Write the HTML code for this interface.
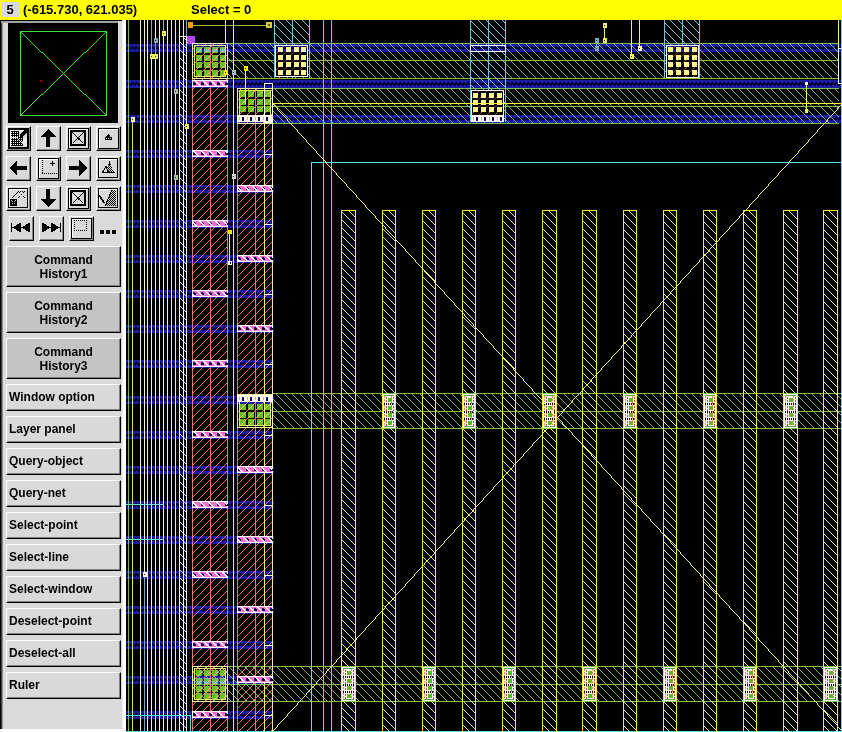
<!DOCTYPE html><html><head><meta charset="utf-8"><style>
*{margin:0;padding:0;box-sizing:border-box}
html,body{width:842px;height:732px;overflow:hidden;background:#000}
body{position:relative;font-family:"Liberation Sans",sans-serif;font-weight:bold;-webkit-font-smoothing:none;}
.abs{position:absolute}
#coord,#sel,#num,.tb{will-change:transform}
#top{left:0;top:0;width:842px;height:20px;background:#ffff00}
#num{left:2px;top:2px;width:18px;height:15px;background:#d8d8e0;font-size:13px;line-height:16px;text-align:center;color:#000;padding-right:2px}
#coord{left:23px;top:0;font-size:13px;line-height:19px;color:#000;white-space:pre}
#sel{left:191px;top:0;font-size:13px;line-height:19px;color:#000;white-space:pre}
#panel{left:0;top:20px;width:126px;height:712px;background:#dadada}
.btn{position:absolute;background:#d9d9d9;border-top:1px solid #fff;border-left:1px solid #fff;border-right:1px solid #000;border-bottom:1px solid #000;box-shadow:inset -1px -1px 0 #8a8a8a}
.tb{position:absolute;left:6px;width:115px;background:#c4c4c4;border-top:1px solid #fff;border-left:1px solid #fff;border-right:1px solid #000;border-bottom:1px solid #000;box-shadow:inset -1px -1px 0 #808080;font-size:12px;color:#000;white-space:pre}
.tb2{height:41px;text-align:center;line-height:14px;padding-top:6px}
.tb1{height:27px;line-height:25px;padding-left:2px;background:#d9d9d9}
</style></head><body>
<div id="top" class="abs"></div>
<div id="num" class="abs">5</div>
<div id="coord" class="abs">(-615.730, 621.035)</div>
<div id="sel" class="abs">Select = 0</div>
<div id="panel" class="abs">
<div class="abs" style="left:0;top:0;width:1px;height:712px;background:#000"></div>
<div class="abs" style="left:1px;top:0;width:1px;height:712px;background:#404040"></div>
<div class="abs" style="left:2px;top:0;width:1px;height:712px;background:#909090"></div>
<div class="abs" style="left:0;top:0;width:126px;height:1px;background:#000"></div>
<div class="abs" style="left:1px;top:1px;width:117px;height:2px;background:#a0a0a0"></div>
<div class="abs" style="left:122px;top:0;width:1px;height:712px;background:#eeeeee"></div>
<div class="abs" style="left:123px;top:0;width:3px;height:712px;background:#fff"></div>
<div class="abs" style="left:0;top:709px;width:126px;height:3px;background:#fff"></div>
</div>
<svg class="abs" style="left:0;top:0" width="126" height="732" shape-rendering="crispEdges">
<rect x="8" y="23" width="110" height="100" fill="#000"/>
<rect x="20.5" y="31.5" width="86" height="84" fill="none" stroke="#40e040" stroke-width="1"/>
<path d="M20,31h1v1h-1zM21,32h1v1h-1zM22,33h1v1h-1zM23,34h1v1h-1zM24,35h1v1h-1zM25,36h1v1h-1zM26,37h1v1h-1zM27,38h1v1h-1zM28,39h1v1h-1zM29,40h1v1h-1zM30,41h1v1h-1zM31,42h1v1h-1zM32,43h1v1h-1zM33,44h1v1h-1zM34,45h1v1h-1zM35,46h1v1h-1zM36,47h1v1h-1zM37,48h1v1h-1zM38,49h1v1h-1zM39,50h1v1h-1zM40,51h1v1h-1zM41,52h1v1h-1zM42,52h1v1h-1zM43,53h1v1h-1zM44,54h1v1h-1zM45,55h1v1h-1zM46,56h1v1h-1zM47,57h1v1h-1zM48,58h1v1h-1zM49,59h1v1h-1zM50,60h1v1h-1zM51,61h1v1h-1zM52,62h1v1h-1zM53,63h1v1h-1zM54,64h1v1h-1zM55,65h1v1h-1zM56,66h1v1h-1zM57,67h1v1h-1zM58,68h1v1h-1zM59,69h1v1h-1zM60,70h1v1h-1zM61,71h1v1h-1zM62,72h1v1h-1zM63,73h1v1h-1zM64,74h1v1h-1zM65,75h1v1h-1zM66,76h1v1h-1zM67,77h1v1h-1zM68,78h1v1h-1zM69,79h1v1h-1zM70,80h1v1h-1zM71,81h1v1h-1zM72,82h1v1h-1zM73,83h1v1h-1zM74,84h1v1h-1zM75,85h1v1h-1zM76,86h1v1h-1zM77,87h1v1h-1zM78,88h1v1h-1zM79,89h1v1h-1zM80,90h1v1h-1zM81,91h1v1h-1zM82,92h1v1h-1zM83,93h1v1h-1zM84,94h1v1h-1zM85,94h1v1h-1zM86,95h1v1h-1zM87,96h1v1h-1zM88,97h1v1h-1zM89,98h1v1h-1zM90,99h1v1h-1zM91,100h1v1h-1zM92,101h1v1h-1zM93,102h1v1h-1zM94,103h1v1h-1zM95,104h1v1h-1zM96,105h1v1h-1zM97,106h1v1h-1zM98,107h1v1h-1zM99,108h1v1h-1zM100,109h1v1h-1zM101,110h1v1h-1zM102,111h1v1h-1zM103,112h1v1h-1zM104,113h1v1h-1zM105,114h1v1h-1zM106,115h1v1h-1zM106,31h1v1h-1zM105,32h1v1h-1zM104,33h1v1h-1zM103,34h1v1h-1zM102,35h1v1h-1zM101,36h1v1h-1zM100,37h1v1h-1zM99,38h1v1h-1zM98,39h1v1h-1zM97,40h1v1h-1zM96,41h1v1h-1zM95,42h1v1h-1zM94,43h1v1h-1zM93,44h1v1h-1zM92,45h1v1h-1zM91,46h1v1h-1zM90,47h1v1h-1zM89,48h1v1h-1zM88,49h1v1h-1zM87,50h1v1h-1zM86,51h1v1h-1zM85,52h1v1h-1zM84,52h1v1h-1zM83,53h1v1h-1zM82,54h1v1h-1zM81,55h1v1h-1zM80,56h1v1h-1zM79,57h1v1h-1zM78,58h1v1h-1zM77,59h1v1h-1zM76,60h1v1h-1zM75,61h1v1h-1zM74,62h1v1h-1zM73,63h1v1h-1zM72,64h1v1h-1zM71,65h1v1h-1zM70,66h1v1h-1zM69,67h1v1h-1zM68,68h1v1h-1zM67,69h1v1h-1zM66,70h1v1h-1zM65,71h1v1h-1zM64,72h1v1h-1zM63,73h1v1h-1zM62,74h1v1h-1zM61,75h1v1h-1zM60,76h1v1h-1zM59,77h1v1h-1zM58,78h1v1h-1zM57,79h1v1h-1zM56,80h1v1h-1zM55,81h1v1h-1zM54,82h1v1h-1zM53,83h1v1h-1zM52,84h1v1h-1zM51,85h1v1h-1zM50,86h1v1h-1zM49,87h1v1h-1zM48,88h1v1h-1zM47,89h1v1h-1zM46,90h1v1h-1zM45,91h1v1h-1zM44,92h1v1h-1zM43,93h1v1h-1zM42,94h1v1h-1zM41,94h1v1h-1zM40,95h1v1h-1zM39,96h1v1h-1zM38,97h1v1h-1zM37,98h1v1h-1zM36,99h1v1h-1zM35,100h1v1h-1zM34,101h1v1h-1zM33,102h1v1h-1zM32,103h1v1h-1zM31,104h1v1h-1zM30,105h1v1h-1zM29,106h1v1h-1zM28,107h1v1h-1zM27,108h1v1h-1zM26,109h1v1h-1zM25,110h1v1h-1zM24,111h1v1h-1zM23,112h1v1h-1zM22,113h1v1h-1zM21,114h1v1h-1zM20,115h1v1h-1z" fill="#40e040"/>
<rect x="40" y="80" width="2" height="2" fill="#a00000"/>
</svg>
<div class="btn" style="left:6px;top:126px;width:25px;height:25px"></div>
<div class="btn" style="left:36px;top:126px;width:25px;height:25px"></div>
<div class="btn" style="left:66px;top:126px;width:25px;height:25px"></div>
<div class="btn" style="left:96px;top:126px;width:25px;height:25px"></div>
<div class="btn" style="left:6px;top:156px;width:25px;height:25px"></div>
<div class="btn" style="left:36px;top:156px;width:25px;height:25px"></div>
<div class="btn" style="left:66px;top:156px;width:25px;height:25px"></div>
<div class="btn" style="left:96px;top:156px;width:25px;height:25px"></div>
<div class="btn" style="left:6px;top:186px;width:25px;height:25px"></div>
<div class="btn" style="left:36px;top:186px;width:25px;height:25px"></div>
<div class="btn" style="left:66px;top:186px;width:25px;height:25px"></div>
<div class="btn" style="left:96px;top:186px;width:25px;height:25px"></div>
<div class="btn" style="left:9px;top:216px;width:25px;height:25px"></div>
<div class="btn" style="left:39px;top:216px;width:25px;height:25px"></div>
<div class="btn" style="left:69px;top:216px;width:25px;height:25px"></div>
<svg class="abs" style="left:0;top:0" width="126" height="250" shape-rendering="crispEdges"><defs><pattern id="st" patternUnits="userSpaceOnUse" width="2" height="2"><rect width="1" height="1" fill="#000"/><rect x="1" y="1" width="1" height="1" fill="#000"/></pattern><pattern id="st2" patternUnits="userSpaceOnUse" width="2" height="2"><rect width="2" height="2" fill="#000"/><rect x="1" y="0" width="1" height="1" fill="#fff"/></pattern></defs>
<path d="M8,128H29V149H8Z M10,130H27V147H10Z" fill="#000" fill-rule="evenodd"/>
<path d="M10,130H27V131H11V147H10Z" fill="#fff"/>
<rect x="10" y="130" width="17" height="17" fill="#d9d9d9"/>
<path d="M10,130H27V131H11V147H10Z" fill="#fff"/>
<rect x="11" y="131" width="8" height="6" fill="url(#st2)"/>
<path d="M11,138H16L23,145V146H11Z" fill="url(#st2)"/>
<path d="M17,138L20,135L24,139L21,142Z" fill="url(#st2)"/>
<path d="M19,135L25,129H27V132L22,138Z" fill="#000"/>
<path d="M23,140L27,135V146H23Z" fill="#ececec"/>
<path d="M40,137L48,129L56,137H50V147H46V137Z" fill="#000"/>
<path d="M68,128H89V149H68Z M69,129H88V148H69Z" fill="#000" fill-rule="evenodd"/>
<path d="M69,129H88V130H70V148H69Z" fill="#fff"/>
<path d="M70,130H86V146H70Z M72,132H84V144H72Z" fill="#000" fill-rule="evenodd"/>
<path d="M72.5,132.5L83.5,143.5M83.5,132.5L72.5,143.5" stroke="#000" stroke-width="1"/>
<path d="M77,138h1v-1h1v1h1v1h-1v1h-1v-1h-1z" fill="#000"/>
<path d="M98,128H119V149H98Z M99,129H118V148H99Z" fill="#000" fill-rule="evenodd"/>
<path d="M99,129H118V130H100V148H99Z" fill="#fff"/>
<path d="M108,134L110,136V137H112V140H105V137H106V136Z" fill="#000"/><rect x="106" y="138" width="1" height="1" fill="#ddd"/><rect x="108" y="138" width="1" height="1" fill="#ddd"/><rect x="110" y="138" width="1" height="1" fill="#ddd"/>
<path d="M9,168L17,160V166H27V170H17V176Z" fill="#000"/>
<path d="M38,158H59V179H38Z M39,159H58V178H39Z" fill="#000" fill-rule="evenodd"/>
<path d="M39,159H58V160H40V178H39Z" fill="#fff"/>
<rect x="42" y="160" width="1" height="1" fill="#000"/>
<rect x="42" y="162" width="1" height="1" fill="#000"/>
<rect x="42" y="164" width="1" height="1" fill="#000"/>
<rect x="42" y="166" width="1" height="1" fill="#000"/>
<rect x="42" y="168" width="1" height="1" fill="#000"/>
<rect x="42" y="170" width="1" height="1" fill="#000"/>
<rect x="42" y="172" width="1" height="1" fill="#000"/>
<rect x="42" y="173" width="1" height="1" fill="#000"/>
<rect x="44" y="173" width="1" height="1" fill="#000"/>
<rect x="46" y="173" width="1" height="1" fill="#000"/>
<rect x="48" y="173" width="1" height="1" fill="#000"/>
<rect x="50" y="173" width="1" height="1" fill="#000"/>
<rect x="52" y="173" width="1" height="1" fill="#000"/>
<rect x="54" y="173" width="1" height="1" fill="#000"/>
<rect x="56" y="173" width="1" height="1" fill="#000"/>
<rect x="50" y="163" width="5" height="1" fill="#000"/><rect x="52" y="161" width="1" height="5" fill="#000"/>
<path d="M87,168L79,160V166H69V170H79V176Z" fill="#000"/>
<path d="M98,158H118V178H98Z M99,159H117V177H99Z" fill="#000" fill-rule="evenodd"/>
<path d="M99,159H117V160H100V177H99Z" fill="#fff"/>
<path d="M102.5,172.5L106,166L108.5,172.5" fill="none" stroke="#000"/>
<path d="M109,161L114,172H107.5L106.5,169Z" fill="url(#st)"/>
<rect x="109" y="161" width="1" height="5" fill="#000"/>
<rect x="102" y="172" width="13" height="1" fill="#000"/>
<path d="M8,188H28V208H8Z M9,189H27V207H9Z" fill="#000" fill-rule="evenodd"/>
<path d="M9,189H27V190H10V207H9Z" fill="#fff"/>
<path d="M11.5,198.5L18.5,191.5" stroke="#000"/>
<rect x="10" y="199" width="7" height="7" fill="#000"/>
<path d="M11.5,200.5L15.5,204.5M15.5,200.5L11.5,204.5" stroke="#ccc"/><rect x="13" y="202" width="1" height="1" fill="#000"/>
<rect x="18" y="191" width="1" height="1" fill="#000"/>
<rect x="19" y="192" width="1" height="1" fill="#000"/>
<rect x="24" y="191" width="1" height="1" fill="#000"/>
<rect x="23" y="192" width="1" height="1" fill="#000"/>
<rect x="21" y="194" width="1" height="1" fill="#000"/>
<rect x="18" y="197" width="1" height="1" fill="#000"/>
<rect x="19" y="196" width="1" height="1" fill="#000"/>
<rect x="24" y="197" width="1" height="1" fill="#000"/>
<rect x="23" y="196" width="1" height="1" fill="#000"/>
<rect x="20" y="191" width="1" height="1" fill="#000"/>
<rect x="22" y="191" width="1" height="1" fill="#000"/>
<path d="M46,189H50V199H56L48,207L40,199H46Z" fill="#000"/>
<path d="M68,188H89V209H68Z M69,189H88V208H69Z" fill="#000" fill-rule="evenodd"/>
<path d="M69,189H88V190H70V208H69Z" fill="#fff"/>
<path d="M70,190H86V206H70Z M72,192H84V204H72Z" fill="#000" fill-rule="evenodd"/>
<path d="M72.5,192.5L83.5,203.5M83.5,192.5L72.5,203.5" stroke="#000" stroke-width="1"/>
<path d="M77,198h1v-1h1v1h1v1h-1v1h-1v-1h-1z" fill="#000"/>
<path d="M98,188H118V208H98Z M99,189H117V207H99Z" fill="#000" fill-rule="evenodd"/>
<path d="M99,189H117V190H100V207H99Z" fill="#fff"/>
<path d="M112,190H116V206H105Z" fill="url(#st)"/>
<path d="M112,190L105,206" stroke="#000" stroke-width="1"/>
<path d="M99.5,195.5L104.5,203.5" stroke="#000" stroke-width="1.5"/>
<rect x="11" y="223" width="1" height="9" fill="#000"/>
<path d="M12,227.5L21,222.5V232.5Z M21,227.5L30,222.5V232.5Z" fill="#000"/>
<rect x="60" y="223" width="1" height="9" fill="#000"/>
<path d="M60,227.5L51,222.5V232.5Z M51,227.5L42,222.5V232.5Z" fill="#000"/>
<path d="M71,218H92V239H71Z M72,219H91V238H72Z" fill="#000" fill-rule="evenodd"/>
<path d="M72,219H91V220H73V238H72Z" fill="#fff"/>
<rect x="74" y="220" width="1" height="1" fill="#000"/><rect x="74" y="230" width="1" height="1" fill="#000"/>
<rect x="76" y="220" width="1" height="1" fill="#000"/><rect x="76" y="230" width="1" height="1" fill="#000"/>
<rect x="78" y="220" width="1" height="1" fill="#000"/><rect x="78" y="230" width="1" height="1" fill="#000"/>
<rect x="80" y="220" width="1" height="1" fill="#000"/><rect x="80" y="230" width="1" height="1" fill="#000"/>
<rect x="82" y="220" width="1" height="1" fill="#000"/><rect x="82" y="230" width="1" height="1" fill="#000"/>
<rect x="84" y="220" width="1" height="1" fill="#000"/><rect x="84" y="230" width="1" height="1" fill="#000"/>
<rect x="86" y="220" width="1" height="1" fill="#000"/><rect x="86" y="230" width="1" height="1" fill="#000"/>
<rect x="74" y="222" width="1" height="1" fill="#000"/><rect x="86" y="222" width="1" height="1" fill="#000"/>
<rect x="74" y="224" width="1" height="1" fill="#000"/><rect x="86" y="224" width="1" height="1" fill="#000"/>
<rect x="74" y="226" width="1" height="1" fill="#000"/><rect x="86" y="226" width="1" height="1" fill="#000"/>
<rect x="74" y="228" width="1" height="1" fill="#000"/><rect x="86" y="228" width="1" height="1" fill="#000"/>
<rect x="100" y="230" width="4" height="4" fill="#000"/>
<rect x="106" y="230" width="4" height="4" fill="#000"/>
<rect x="112" y="230" width="4" height="4" fill="#000"/></svg>
<div class="tb tb2" style="top:246px">Command
History1</div>
<div class="tb tb2" style="top:292px">Command
History2</div>
<div class="tb tb2" style="top:338px">Command
History3</div>
<div class="tb tb1" style="top:384px">Window option</div>
<div class="tb tb1" style="top:416px">Layer panel</div>
<div class="tb tb1" style="top:448px">Query-object</div>
<div class="tb tb1" style="top:480px">Query-net</div>
<div class="tb tb1" style="top:512px">Select-point</div>
<div class="tb tb1" style="top:544px">Select-line</div>
<div class="tb tb1" style="top:576px">Select-window</div>
<div class="tb tb1" style="top:608px">Deselect-point</div>
<div class="tb tb1" style="top:640px">Deselect-all</div>
<div class="tb tb1" style="top:672px">Ruler</div>
<svg class="abs" style="left:0;top:0" width="842" height="732" shape-rendering="crispEdges"><defs><pattern id="bh1" patternUnits="userSpaceOnUse" width="4" height="1"><rect width="2" height="1" fill="#1c1cc0"/><rect x="2" width="2" height="1" fill="#080850"/></pattern><pattern id="bh2" patternUnits="userSpaceOnUse" width="4" height="1"><rect x="1" width="2" height="1" fill="#1c1cc0"/><rect x="3" width="1" height="1" fill="#080850"/></pattern><pattern id="p0" patternUnits="userSpaceOnUse" x="0" y="6" width="8" height="8"><path d="M-1,-1L9,9M7,-1L9,1M-1,7L1,9" stroke="#80b060" stroke-width="1" fill="none"/></pattern><pattern id="p1" patternUnits="userSpaceOnUse" x="0" y="6" width="8" height="8"><path d="M-1,-1L9,9M7,-1L9,1M-1,7L1,9" stroke="#78c4e0" stroke-width="1" fill="none"/></pattern><pattern id="p2" patternUnits="userSpaceOnUse" x="2" y="0" width="8" height="8"><path d="M-1,9L9,-1M-1,1L1,-1M7,9L9,7" stroke="#e87474" stroke-width="1" fill="none"/></pattern><pattern id="p3" patternUnits="userSpaceOnUse" x="0" y="6" width="8" height="8"><path d="M-1,-1L9,9M7,-1L9,1M-1,7L1,9" stroke="#d8d0ff" stroke-width="1" fill="none"/></pattern><pattern id="p4" patternUnits="userSpaceOnUse" x="0" y="6" width="8" height="8"><path d="M-1,-1L9,9M7,-1L9,1M-1,7L1,9" stroke="#ffffff" stroke-width="1" fill="none"/></pattern><pattern id="p5" patternUnits="userSpaceOnUse" x="1" y="6" width="8" height="8"><path d="M-1,-1L9,9M7,-1L9,1M-1,7L1,9" stroke="#ffe0f8" stroke-width="1" fill="none"/></pattern><pattern id="p6" patternUnits="userSpaceOnUse" x="2" y="0" width="8" height="8"><path d="M-1,9L9,-1M-1,1L1,-1M7,9L9,7" stroke="#904030" stroke-width="1" fill="none"/></pattern><pattern id="p7" patternUnits="userSpaceOnUse" x="0" y="6" width="8" height="8"><path d="M-1,-1L9,9M7,-1L9,1M-1,7L1,9" stroke="#e8e868" stroke-width="1" fill="none"/></pattern><clipPath id="cc"><rect x="126" y="20" width="716" height="712"/></clipPath></defs><g clip-path="url(#cc)">
<rect x="126" y="20" width="716" height="712" fill="#000"/>
<rect x="227" y="43" width="612" height="36" fill="url(#p0)"/>
<rect x="272" y="88" width="567" height="36" fill="url(#p0)"/>
<rect x="227" y="43" width="612" height="1" fill="#78c048"/>
<rect x="227" y="60" width="612" height="1" fill="#78c048"/>
<rect x="227" y="78" width="612" height="1" fill="#78c048"/>
<rect x="272" y="88" width="567" height="1" fill="#78c048"/>
<rect x="272" y="106" width="567" height="1" fill="#78c048"/>
<rect x="272" y="123" width="567" height="1" fill="#78c048"/>
<rect x="274" y="20" width="36" height="57" fill="url(#p1)"/>
<rect x="274" y="20" width="1" height="58" fill="#78c4e0"/>
<rect x="309" y="20" width="1" height="58" fill="#78c4e0"/>
<rect x="292" y="20" width="1" height="58" fill="#78c4e0"/>
<rect x="470" y="20" width="36" height="101" fill="url(#p1)"/>
<rect x="470" y="20" width="1" height="102" fill="#78c4e0"/>
<rect x="505" y="20" width="1" height="102" fill="#78c4e0"/>
<rect x="488" y="20" width="1" height="102" fill="#78c4e0"/>
<rect x="664" y="20" width="36" height="57" fill="url(#p1)"/>
<rect x="664" y="20" width="1" height="58" fill="#78c4e0"/>
<rect x="699" y="20" width="1" height="58" fill="#78c4e0"/>
<rect x="682" y="20" width="1" height="58" fill="#78c4e0"/>
<rect x="470.5" y="45.5" width="35" height="6" fill="none" stroke="#ffffff"/>
<rect x="192" y="43" width="36" height="690" fill="url(#p2)"/>
<rect x="192" y="43" width="1" height="689" fill="#e87474"/>
<rect x="227" y="43" width="1" height="689" fill="#e87474"/>
<rect x="210" y="43" width="1" height="689" fill="#e87474"/>
<rect x="237" y="88" width="36" height="650" fill="url(#p2)"/>
<rect x="237" y="88" width="1" height="644" fill="#e87474"/>
<rect x="272" y="88" width="1" height="644" fill="#f0e0c0"/>
<rect x="255" y="88" width="1" height="644" fill="#e87474"/>
<rect x="179" y="36" width="8" height="700" fill="url(#p3)"/>
<rect x="179" y="36" width="8" height="1" fill="#f4f4ff"/>
<rect x="128" y="20" width="1" height="712" fill="#8cb040"/>
<rect x="132" y="117" width="1" height="615" fill="#e0e040"/>
<rect x="131" y="117" width="4" height="5" fill="#f4f4c4"/>
<rect x="132" y="119" width="1" height="1" fill="#202000"/>
<rect x="140" y="20" width="1" height="712" fill="#f4f4c4"/>
<rect x="144" y="20" width="1" height="712" fill="#f4f4c4"/>
<rect x="147" y="20" width="1" height="712" fill="#f4f4c4"/>
<rect x="151" y="20" width="1" height="712" fill="#f4f4c4"/>
<rect x="155" y="20" width="1" height="712" fill="#f4f4c4"/>
<rect x="159" y="20" width="1" height="712" fill="#f4f4c4"/>
<rect x="163" y="20" width="1" height="712" fill="#f4f4c4"/>
<rect x="167" y="20" width="1" height="712" fill="#f4f4c4"/>
<rect x="171" y="20" width="1" height="712" fill="#f0f0a8"/>
<rect x="175" y="20" width="1" height="712" fill="#f0f0a8"/>
<rect x="179" y="20" width="1" height="712" fill="#f4f4c4"/>
<rect x="183" y="20" width="1" height="712" fill="#f0f0a8"/>
<rect x="186" y="20" width="1" height="712" fill="#f4f4c4"/>
<rect x="151" y="20" width="1" height="35" fill="#80a8c0"/>
<rect x="155" y="43" width="1" height="12" fill="#80a8c0"/>
<rect x="154" y="38" width="4" height="5" fill="#80a8c0"/>
<rect x="155" y="40" width="1" height="1" fill="#202000"/>
<rect x="150" y="54" width="4" height="5" fill="#f0f060"/>
<rect x="151" y="56" width="1" height="1" fill="#202000"/>
<rect x="154" y="54" width="4" height="5" fill="#f0f060"/>
<rect x="155" y="56" width="1" height="1" fill="#202000"/>
<rect x="163" y="20" width="1" height="12" fill="#80a8c0"/>
<rect x="162" y="31" width="4" height="5" fill="#f0f060"/>
<rect x="163" y="33" width="1" height="1" fill="#202000"/>
<rect x="186" y="20" width="1" height="17" fill="#80a8c0"/>
<rect x="179" y="36" width="1" height="696" fill="#f4f4ff"/>
<rect x="183" y="36" width="1" height="696" fill="#f4f4ff"/>
<rect x="186" y="36" width="1" height="696" fill="#f4f4ff"/>
<rect x="144" y="574" width="1" height="158" fill="#80a8c0"/>
<rect x="143" y="572" width="4" height="5" fill="#f4f4c4"/>
<rect x="144" y="574" width="1" height="1" fill="#202000"/>
<rect x="233" y="20" width="1" height="712" fill="#f0f070"/>
<rect x="232" y="174" width="4" height="5" fill="#d0e0c0"/>
<rect x="233" y="176" width="1" height="1" fill="#202000"/>
<rect x="229" y="230" width="1" height="35" fill="#f0f070"/>
<rect x="228" y="230" width="4" height="4" fill="#f0f000"/>
<rect x="228.5" y="261.5" width="3" height="3" fill="none" stroke="#ffffe0"/>
<rect x="185" y="124" width="4" height="5" fill="#f0f040"/>
<rect x="186" y="126" width="1" height="1" fill="#202000"/>
<rect x="174" y="175" width="4" height="5" fill="#a0c0a0"/>
<rect x="175" y="177" width="1" height="1" fill="#202000"/>
<rect x="174" y="89" width="4" height="5" fill="#a0c0a0"/>
<rect x="175" y="91" width="1" height="1" fill="#202000"/>
<rect x="225" y="20" width="1" height="24" fill="#f0f070"/>
<rect x="264" y="83" width="1" height="649" fill="#f0f070"/>
<rect x="264.5" y="83.5" width="8" height="39" fill="none" stroke="#ffffff"/>
<rect x="187" y="36" width="8" height="8" fill="#b048f0"/>
<rect x="188" y="22" width="5" height="6" fill="#f0a000"/>
<rect x="193" y="25" width="74" height="1" fill="#a0c040"/>
<rect x="266" y="22" width="6" height="6" fill="#d0d040"/>
<rect x="268" y="24" width="2" height="2" fill="#606000"/>
<g style="mix-blend-mode:lighten">
<rect x="196" y="47" width="6" height="6" fill="#68c020"/>
<rect x="204" y="47" width="6" height="6" fill="#68c020"/>
<rect x="212" y="47" width="6" height="6" fill="#68c020"/>
<rect x="220" y="47" width="6" height="6" fill="#68c020"/>
<rect x="196" y="55" width="6" height="6" fill="#68c020"/>
<rect x="204" y="55" width="6" height="6" fill="#68c020"/>
<rect x="212" y="55" width="6" height="6" fill="#68c020"/>
<rect x="220" y="55" width="6" height="6" fill="#68c020"/>
<rect x="196" y="62" width="6" height="6" fill="#68c020"/>
<rect x="204" y="62" width="6" height="6" fill="#68c020"/>
<rect x="212" y="62" width="6" height="6" fill="#68c020"/>
<rect x="220" y="62" width="6" height="6" fill="#68c020"/>
<rect x="196" y="70" width="6" height="6" fill="#68c020"/>
<rect x="204" y="70" width="6" height="6" fill="#68c020"/>
<rect x="212" y="70" width="6" height="6" fill="#68c020"/>
<rect x="220" y="70" width="6" height="6" fill="#68c020"/>
<rect x="192.5" y="43.5" width="35" height="35" fill="none" stroke="#f0f0a0"/>
<rect x="194.5" y="45.5" width="31" height="31" fill="none" stroke="#e8e860"/>
</g>
<g style="mix-blend-mode:lighten">
<rect x="240" y="91" width="6" height="6" fill="#68c020"/>
<rect x="248" y="91" width="6" height="6" fill="#68c020"/>
<rect x="257" y="91" width="6" height="6" fill="#68c020"/>
<rect x="265" y="91" width="6" height="6" fill="#68c020"/>
<rect x="240" y="99" width="6" height="6" fill="#68c020"/>
<rect x="248" y="99" width="6" height="6" fill="#68c020"/>
<rect x="257" y="99" width="6" height="6" fill="#68c020"/>
<rect x="265" y="99" width="6" height="6" fill="#68c020"/>
<rect x="240" y="106" width="6" height="6" fill="#68c020"/>
<rect x="248" y="106" width="6" height="6" fill="#68c020"/>
<rect x="257" y="106" width="6" height="6" fill="#68c020"/>
<rect x="265" y="106" width="6" height="6" fill="#68c020"/>
<rect x="237.5" y="88.5" width="35" height="35" fill="none" stroke="#f0f0a0"/>
<rect x="239.5" y="90.5" width="31" height="31" fill="none" stroke="#e8e860"/>
</g>
<rect x="237" y="115" width="36" height="7" fill="#fff8e8"/>
<rect x="242" y="117" width="2" height="4" fill="#000050"/>
<rect x="239" y="117" width="1" height="3" fill="#a0c0c0"/>
<rect x="250" y="117" width="2" height="4" fill="#000050"/>
<rect x="247" y="117" width="1" height="3" fill="#a0c0c0"/>
<rect x="258" y="117" width="2" height="4" fill="#000050"/>
<rect x="255" y="117" width="1" height="3" fill="#a0c0c0"/>
<rect x="266" y="117" width="2" height="4" fill="#000050"/>
<rect x="263" y="117" width="1" height="3" fill="#a0c0c0"/>
<g style="mix-blend-mode:lighten">
<rect x="240" y="404" width="6" height="6" fill="#68c020"/>
<rect x="248" y="404" width="6" height="6" fill="#68c020"/>
<rect x="257" y="404" width="6" height="6" fill="#68c020"/>
<rect x="265" y="404" width="6" height="6" fill="#68c020"/>
<rect x="240" y="412" width="6" height="6" fill="#68c020"/>
<rect x="248" y="412" width="6" height="6" fill="#68c020"/>
<rect x="257" y="412" width="6" height="6" fill="#68c020"/>
<rect x="265" y="412" width="6" height="6" fill="#68c020"/>
<rect x="240" y="419" width="6" height="6" fill="#68c020"/>
<rect x="248" y="419" width="6" height="6" fill="#68c020"/>
<rect x="257" y="419" width="6" height="6" fill="#68c020"/>
<rect x="265" y="419" width="6" height="6" fill="#68c020"/>
<rect x="237.5" y="394.5" width="35" height="33" fill="none" stroke="#f0f0a0"/>
<rect x="239.5" y="396.5" width="31" height="29" fill="none" stroke="#e8e860"/>
</g>
<rect x="237" y="395" width="36" height="7" fill="#fff8e8"/>
<rect x="242" y="397" width="2" height="4" fill="#000050"/>
<rect x="239" y="397" width="1" height="3" fill="#a0c0c0"/>
<rect x="250" y="397" width="2" height="4" fill="#000050"/>
<rect x="247" y="397" width="1" height="3" fill="#a0c0c0"/>
<rect x="258" y="397" width="2" height="4" fill="#000050"/>
<rect x="255" y="397" width="1" height="3" fill="#a0c0c0"/>
<rect x="266" y="397" width="2" height="4" fill="#000050"/>
<rect x="263" y="397" width="1" height="3" fill="#a0c0c0"/>
<g style="mix-blend-mode:lighten">
<rect x="196" y="670" width="6" height="6" fill="#68c020"/>
<rect x="204" y="670" width="6" height="6" fill="#68c020"/>
<rect x="212" y="670" width="6" height="6" fill="#68c020"/>
<rect x="220" y="670" width="6" height="6" fill="#68c020"/>
<rect x="196" y="678" width="6" height="6" fill="#68c020"/>
<rect x="204" y="678" width="6" height="6" fill="#68c020"/>
<rect x="212" y="678" width="6" height="6" fill="#68c020"/>
<rect x="220" y="678" width="6" height="6" fill="#68c020"/>
<rect x="196" y="686" width="6" height="6" fill="#68c020"/>
<rect x="204" y="686" width="6" height="6" fill="#68c020"/>
<rect x="212" y="686" width="6" height="6" fill="#68c020"/>
<rect x="220" y="686" width="6" height="6" fill="#68c020"/>
<rect x="196" y="693" width="6" height="6" fill="#68c020"/>
<rect x="204" y="693" width="6" height="6" fill="#68c020"/>
<rect x="212" y="693" width="6" height="6" fill="#68c020"/>
<rect x="220" y="693" width="6" height="6" fill="#68c020"/>
<rect x="192.5" y="666.5" width="35" height="35" fill="none" stroke="#f0f0a0"/>
<rect x="194.5" y="668.5" width="31" height="31" fill="none" stroke="#e8e860"/>
</g>
<rect x="192" y="80" width="36" height="7" fill="#ffffff"/>
<rect x="193" y="81" width="34" height="5" fill="#f070d0"/>
<rect x="193" y="82" width="2" height="3" fill="#180030"/>
<rect x="195" y="83" width="1" height="2" fill="#180030"/>
<rect x="201" y="82" width="2" height="3" fill="#180030"/>
<rect x="203" y="83" width="1" height="2" fill="#180030"/>
<rect x="209" y="82" width="2" height="3" fill="#180030"/>
<rect x="211" y="83" width="1" height="2" fill="#180030"/>
<rect x="217" y="82" width="2" height="3" fill="#180030"/>
<rect x="219" y="83" width="1" height="2" fill="#180030"/>
<rect x="225" y="82" width="2" height="3" fill="#180030"/>
<rect x="227" y="83" width="1" height="2" fill="#180030"/>
<rect x="193" y="81" width="34" height="5" fill="url(#p4)"/>
<rect x="193" y="81" width="34" height="5" fill="url(#p5)"/>
<rect x="192" y="150" width="36" height="7" fill="#ffffff"/>
<rect x="193" y="151" width="34" height="5" fill="#f070d0"/>
<rect x="193" y="152" width="2" height="3" fill="#180030"/>
<rect x="195" y="153" width="1" height="2" fill="#180030"/>
<rect x="201" y="152" width="2" height="3" fill="#180030"/>
<rect x="203" y="153" width="1" height="2" fill="#180030"/>
<rect x="209" y="152" width="2" height="3" fill="#180030"/>
<rect x="211" y="153" width="1" height="2" fill="#180030"/>
<rect x="217" y="152" width="2" height="3" fill="#180030"/>
<rect x="219" y="153" width="1" height="2" fill="#180030"/>
<rect x="225" y="152" width="2" height="3" fill="#180030"/>
<rect x="227" y="153" width="1" height="2" fill="#180030"/>
<rect x="193" y="151" width="34" height="5" fill="url(#p4)"/>
<rect x="193" y="151" width="34" height="5" fill="url(#p5)"/>
<rect x="264" y="154" width="9" height="1" fill="#ffffff"/>
<rect x="237" y="185" width="36" height="7" fill="#ffffff"/>
<rect x="238" y="186" width="34" height="5" fill="#f070d0"/>
<rect x="238" y="187" width="2" height="3" fill="#180030"/>
<rect x="240" y="188" width="1" height="2" fill="#180030"/>
<rect x="246" y="187" width="2" height="3" fill="#180030"/>
<rect x="248" y="188" width="1" height="2" fill="#180030"/>
<rect x="254" y="187" width="2" height="3" fill="#180030"/>
<rect x="256" y="188" width="1" height="2" fill="#180030"/>
<rect x="262" y="187" width="2" height="3" fill="#180030"/>
<rect x="264" y="188" width="1" height="2" fill="#180030"/>
<rect x="270" y="187" width="2" height="3" fill="#180030"/>
<rect x="272" y="188" width="1" height="2" fill="#180030"/>
<rect x="238" y="186" width="34" height="5" fill="url(#p4)"/>
<rect x="238" y="186" width="34" height="5" fill="url(#p5)"/>
<rect x="192" y="220" width="36" height="7" fill="#ffffff"/>
<rect x="193" y="221" width="34" height="5" fill="#f070d0"/>
<rect x="193" y="222" width="2" height="3" fill="#180030"/>
<rect x="195" y="223" width="1" height="2" fill="#180030"/>
<rect x="201" y="222" width="2" height="3" fill="#180030"/>
<rect x="203" y="223" width="1" height="2" fill="#180030"/>
<rect x="209" y="222" width="2" height="3" fill="#180030"/>
<rect x="211" y="223" width="1" height="2" fill="#180030"/>
<rect x="217" y="222" width="2" height="3" fill="#180030"/>
<rect x="219" y="223" width="1" height="2" fill="#180030"/>
<rect x="225" y="222" width="2" height="3" fill="#180030"/>
<rect x="227" y="223" width="1" height="2" fill="#180030"/>
<rect x="193" y="221" width="34" height="5" fill="url(#p4)"/>
<rect x="193" y="221" width="34" height="5" fill="url(#p5)"/>
<rect x="264" y="224" width="9" height="1" fill="#ffffff"/>
<rect x="237" y="255" width="36" height="7" fill="#ffffff"/>
<rect x="238" y="256" width="34" height="5" fill="#f070d0"/>
<rect x="238" y="257" width="2" height="3" fill="#180030"/>
<rect x="240" y="258" width="1" height="2" fill="#180030"/>
<rect x="246" y="257" width="2" height="3" fill="#180030"/>
<rect x="248" y="258" width="1" height="2" fill="#180030"/>
<rect x="254" y="257" width="2" height="3" fill="#180030"/>
<rect x="256" y="258" width="1" height="2" fill="#180030"/>
<rect x="262" y="257" width="2" height="3" fill="#180030"/>
<rect x="264" y="258" width="1" height="2" fill="#180030"/>
<rect x="270" y="257" width="2" height="3" fill="#180030"/>
<rect x="272" y="258" width="1" height="2" fill="#180030"/>
<rect x="238" y="256" width="34" height="5" fill="url(#p4)"/>
<rect x="238" y="256" width="34" height="5" fill="url(#p5)"/>
<rect x="192" y="290" width="36" height="7" fill="#ffffff"/>
<rect x="193" y="291" width="34" height="5" fill="#f070d0"/>
<rect x="193" y="292" width="2" height="3" fill="#180030"/>
<rect x="195" y="293" width="1" height="2" fill="#180030"/>
<rect x="201" y="292" width="2" height="3" fill="#180030"/>
<rect x="203" y="293" width="1" height="2" fill="#180030"/>
<rect x="209" y="292" width="2" height="3" fill="#180030"/>
<rect x="211" y="293" width="1" height="2" fill="#180030"/>
<rect x="217" y="292" width="2" height="3" fill="#180030"/>
<rect x="219" y="293" width="1" height="2" fill="#180030"/>
<rect x="225" y="292" width="2" height="3" fill="#180030"/>
<rect x="227" y="293" width="1" height="2" fill="#180030"/>
<rect x="193" y="291" width="34" height="5" fill="url(#p4)"/>
<rect x="193" y="291" width="34" height="5" fill="url(#p5)"/>
<rect x="264" y="294" width="9" height="1" fill="#ffffff"/>
<rect x="237" y="325" width="36" height="7" fill="#ffffff"/>
<rect x="238" y="326" width="34" height="5" fill="#f070d0"/>
<rect x="238" y="327" width="2" height="3" fill="#180030"/>
<rect x="240" y="328" width="1" height="2" fill="#180030"/>
<rect x="246" y="327" width="2" height="3" fill="#180030"/>
<rect x="248" y="328" width="1" height="2" fill="#180030"/>
<rect x="254" y="327" width="2" height="3" fill="#180030"/>
<rect x="256" y="328" width="1" height="2" fill="#180030"/>
<rect x="262" y="327" width="2" height="3" fill="#180030"/>
<rect x="264" y="328" width="1" height="2" fill="#180030"/>
<rect x="270" y="327" width="2" height="3" fill="#180030"/>
<rect x="272" y="328" width="1" height="2" fill="#180030"/>
<rect x="238" y="326" width="34" height="5" fill="url(#p4)"/>
<rect x="238" y="326" width="34" height="5" fill="url(#p5)"/>
<rect x="192" y="360" width="36" height="7" fill="#ffffff"/>
<rect x="193" y="361" width="34" height="5" fill="#f070d0"/>
<rect x="193" y="362" width="2" height="3" fill="#180030"/>
<rect x="195" y="363" width="1" height="2" fill="#180030"/>
<rect x="201" y="362" width="2" height="3" fill="#180030"/>
<rect x="203" y="363" width="1" height="2" fill="#180030"/>
<rect x="209" y="362" width="2" height="3" fill="#180030"/>
<rect x="211" y="363" width="1" height="2" fill="#180030"/>
<rect x="217" y="362" width="2" height="3" fill="#180030"/>
<rect x="219" y="363" width="1" height="2" fill="#180030"/>
<rect x="225" y="362" width="2" height="3" fill="#180030"/>
<rect x="227" y="363" width="1" height="2" fill="#180030"/>
<rect x="193" y="361" width="34" height="5" fill="url(#p4)"/>
<rect x="193" y="361" width="34" height="5" fill="url(#p5)"/>
<rect x="264" y="364" width="9" height="1" fill="#ffffff"/>
<rect x="192" y="431" width="36" height="7" fill="#ffffff"/>
<rect x="193" y="432" width="34" height="5" fill="#f070d0"/>
<rect x="193" y="433" width="2" height="3" fill="#180030"/>
<rect x="195" y="434" width="1" height="2" fill="#180030"/>
<rect x="201" y="433" width="2" height="3" fill="#180030"/>
<rect x="203" y="434" width="1" height="2" fill="#180030"/>
<rect x="209" y="433" width="2" height="3" fill="#180030"/>
<rect x="211" y="434" width="1" height="2" fill="#180030"/>
<rect x="217" y="433" width="2" height="3" fill="#180030"/>
<rect x="219" y="434" width="1" height="2" fill="#180030"/>
<rect x="225" y="433" width="2" height="3" fill="#180030"/>
<rect x="227" y="434" width="1" height="2" fill="#180030"/>
<rect x="193" y="432" width="34" height="5" fill="url(#p4)"/>
<rect x="193" y="432" width="34" height="5" fill="url(#p5)"/>
<rect x="264" y="435" width="9" height="1" fill="#ffffff"/>
<rect x="237" y="466" width="36" height="7" fill="#ffffff"/>
<rect x="238" y="467" width="34" height="5" fill="#f070d0"/>
<rect x="238" y="468" width="2" height="3" fill="#180030"/>
<rect x="240" y="469" width="1" height="2" fill="#180030"/>
<rect x="246" y="468" width="2" height="3" fill="#180030"/>
<rect x="248" y="469" width="1" height="2" fill="#180030"/>
<rect x="254" y="468" width="2" height="3" fill="#180030"/>
<rect x="256" y="469" width="1" height="2" fill="#180030"/>
<rect x="262" y="468" width="2" height="3" fill="#180030"/>
<rect x="264" y="469" width="1" height="2" fill="#180030"/>
<rect x="270" y="468" width="2" height="3" fill="#180030"/>
<rect x="272" y="469" width="1" height="2" fill="#180030"/>
<rect x="238" y="467" width="34" height="5" fill="url(#p4)"/>
<rect x="238" y="467" width="34" height="5" fill="url(#p5)"/>
<rect x="192" y="501" width="36" height="7" fill="#ffffff"/>
<rect x="193" y="502" width="34" height="5" fill="#f070d0"/>
<rect x="193" y="503" width="2" height="3" fill="#180030"/>
<rect x="195" y="504" width="1" height="2" fill="#180030"/>
<rect x="201" y="503" width="2" height="3" fill="#180030"/>
<rect x="203" y="504" width="1" height="2" fill="#180030"/>
<rect x="209" y="503" width="2" height="3" fill="#180030"/>
<rect x="211" y="504" width="1" height="2" fill="#180030"/>
<rect x="217" y="503" width="2" height="3" fill="#180030"/>
<rect x="219" y="504" width="1" height="2" fill="#180030"/>
<rect x="225" y="503" width="2" height="3" fill="#180030"/>
<rect x="227" y="504" width="1" height="2" fill="#180030"/>
<rect x="193" y="502" width="34" height="5" fill="url(#p4)"/>
<rect x="193" y="502" width="34" height="5" fill="url(#p5)"/>
<rect x="264" y="505" width="9" height="1" fill="#ffffff"/>
<rect x="237" y="536" width="36" height="7" fill="#ffffff"/>
<rect x="238" y="537" width="34" height="5" fill="#f070d0"/>
<rect x="238" y="538" width="2" height="3" fill="#180030"/>
<rect x="240" y="539" width="1" height="2" fill="#180030"/>
<rect x="246" y="538" width="2" height="3" fill="#180030"/>
<rect x="248" y="539" width="1" height="2" fill="#180030"/>
<rect x="254" y="538" width="2" height="3" fill="#180030"/>
<rect x="256" y="539" width="1" height="2" fill="#180030"/>
<rect x="262" y="538" width="2" height="3" fill="#180030"/>
<rect x="264" y="539" width="1" height="2" fill="#180030"/>
<rect x="270" y="538" width="2" height="3" fill="#180030"/>
<rect x="272" y="539" width="1" height="2" fill="#180030"/>
<rect x="238" y="537" width="34" height="5" fill="url(#p4)"/>
<rect x="238" y="537" width="34" height="5" fill="url(#p5)"/>
<rect x="192" y="571" width="36" height="7" fill="#ffffff"/>
<rect x="193" y="572" width="34" height="5" fill="#f070d0"/>
<rect x="193" y="573" width="2" height="3" fill="#180030"/>
<rect x="195" y="574" width="1" height="2" fill="#180030"/>
<rect x="201" y="573" width="2" height="3" fill="#180030"/>
<rect x="203" y="574" width="1" height="2" fill="#180030"/>
<rect x="209" y="573" width="2" height="3" fill="#180030"/>
<rect x="211" y="574" width="1" height="2" fill="#180030"/>
<rect x="217" y="573" width="2" height="3" fill="#180030"/>
<rect x="219" y="574" width="1" height="2" fill="#180030"/>
<rect x="225" y="573" width="2" height="3" fill="#180030"/>
<rect x="227" y="574" width="1" height="2" fill="#180030"/>
<rect x="193" y="572" width="34" height="5" fill="url(#p4)"/>
<rect x="193" y="572" width="34" height="5" fill="url(#p5)"/>
<rect x="264" y="575" width="9" height="1" fill="#ffffff"/>
<rect x="237" y="606" width="36" height="7" fill="#ffffff"/>
<rect x="238" y="607" width="34" height="5" fill="#f070d0"/>
<rect x="238" y="608" width="2" height="3" fill="#180030"/>
<rect x="240" y="609" width="1" height="2" fill="#180030"/>
<rect x="246" y="608" width="2" height="3" fill="#180030"/>
<rect x="248" y="609" width="1" height="2" fill="#180030"/>
<rect x="254" y="608" width="2" height="3" fill="#180030"/>
<rect x="256" y="609" width="1" height="2" fill="#180030"/>
<rect x="262" y="608" width="2" height="3" fill="#180030"/>
<rect x="264" y="609" width="1" height="2" fill="#180030"/>
<rect x="270" y="608" width="2" height="3" fill="#180030"/>
<rect x="272" y="609" width="1" height="2" fill="#180030"/>
<rect x="238" y="607" width="34" height="5" fill="url(#p4)"/>
<rect x="238" y="607" width="34" height="5" fill="url(#p5)"/>
<rect x="192" y="641" width="36" height="7" fill="#ffffff"/>
<rect x="193" y="642" width="34" height="5" fill="#f070d0"/>
<rect x="193" y="643" width="2" height="3" fill="#180030"/>
<rect x="195" y="644" width="1" height="2" fill="#180030"/>
<rect x="201" y="643" width="2" height="3" fill="#180030"/>
<rect x="203" y="644" width="1" height="2" fill="#180030"/>
<rect x="209" y="643" width="2" height="3" fill="#180030"/>
<rect x="211" y="644" width="1" height="2" fill="#180030"/>
<rect x="217" y="643" width="2" height="3" fill="#180030"/>
<rect x="219" y="644" width="1" height="2" fill="#180030"/>
<rect x="225" y="643" width="2" height="3" fill="#180030"/>
<rect x="227" y="644" width="1" height="2" fill="#180030"/>
<rect x="193" y="642" width="34" height="5" fill="url(#p4)"/>
<rect x="193" y="642" width="34" height="5" fill="url(#p5)"/>
<rect x="264" y="645" width="9" height="1" fill="#ffffff"/>
<rect x="237" y="676" width="36" height="7" fill="#ffffff"/>
<rect x="238" y="677" width="34" height="5" fill="#f070d0"/>
<rect x="238" y="678" width="2" height="3" fill="#180030"/>
<rect x="240" y="679" width="1" height="2" fill="#180030"/>
<rect x="246" y="678" width="2" height="3" fill="#180030"/>
<rect x="248" y="679" width="1" height="2" fill="#180030"/>
<rect x="254" y="678" width="2" height="3" fill="#180030"/>
<rect x="256" y="679" width="1" height="2" fill="#180030"/>
<rect x="262" y="678" width="2" height="3" fill="#180030"/>
<rect x="264" y="679" width="1" height="2" fill="#180030"/>
<rect x="270" y="678" width="2" height="3" fill="#180030"/>
<rect x="272" y="679" width="1" height="2" fill="#180030"/>
<rect x="238" y="677" width="34" height="5" fill="url(#p4)"/>
<rect x="238" y="677" width="34" height="5" fill="url(#p5)"/>
<rect x="192" y="711" width="36" height="7" fill="#ffffff"/>
<rect x="193" y="712" width="34" height="5" fill="#f070d0"/>
<rect x="193" y="713" width="2" height="3" fill="#180030"/>
<rect x="195" y="714" width="1" height="2" fill="#180030"/>
<rect x="201" y="713" width="2" height="3" fill="#180030"/>
<rect x="203" y="714" width="1" height="2" fill="#180030"/>
<rect x="209" y="713" width="2" height="3" fill="#180030"/>
<rect x="211" y="714" width="1" height="2" fill="#180030"/>
<rect x="217" y="713" width="2" height="3" fill="#180030"/>
<rect x="219" y="714" width="1" height="2" fill="#180030"/>
<rect x="225" y="713" width="2" height="3" fill="#180030"/>
<rect x="227" y="714" width="1" height="2" fill="#180030"/>
<rect x="193" y="712" width="34" height="5" fill="url(#p4)"/>
<rect x="193" y="712" width="34" height="5" fill="url(#p5)"/>
<rect x="264" y="715" width="9" height="1" fill="#ffffff"/>
<rect x="275" y="45" width="33" height="32" fill="#000"/>
<rect x="275" y="45" width="33" height="32" fill="url(#p6)"/>
<rect x="278" y="47" width="5" height="5" fill="#f8f490"/>
<rect x="286" y="47" width="5" height="5" fill="#f8f490"/>
<rect x="294" y="47" width="5" height="5" fill="#f8f490"/>
<rect x="301" y="47" width="5" height="5" fill="#f8f490"/>
<rect x="278" y="55" width="5" height="5" fill="#f8f490"/>
<rect x="286" y="55" width="5" height="5" fill="#f8f490"/>
<rect x="294" y="55" width="5" height="5" fill="#f8f490"/>
<rect x="301" y="55" width="5" height="5" fill="#f8f490"/>
<rect x="278" y="62" width="5" height="5" fill="#f8f490"/>
<rect x="286" y="62" width="5" height="5" fill="#f8f490"/>
<rect x="294" y="62" width="5" height="5" fill="#f8f490"/>
<rect x="301" y="62" width="5" height="5" fill="#f8f490"/>
<rect x="278" y="70" width="5" height="5" fill="#f8f490"/>
<rect x="286" y="70" width="5" height="5" fill="#f8f490"/>
<rect x="294" y="70" width="5" height="5" fill="#f8f490"/>
<rect x="301" y="70" width="5" height="5" fill="#f8f490"/>
<rect x="275.5" y="45.5" width="32" height="31" fill="none" stroke="#ffffff"/>
<rect x="471" y="90" width="33" height="32" fill="#000"/>
<rect x="471" y="90" width="33" height="32" fill="url(#p6)"/>
<rect x="473" y="93" width="5" height="5" fill="#f8f490"/>
<rect x="481" y="93" width="5" height="5" fill="#f8f490"/>
<rect x="489" y="93" width="5" height="5" fill="#f8f490"/>
<rect x="497" y="93" width="5" height="5" fill="#f8f490"/>
<rect x="473" y="100" width="5" height="5" fill="#f8f490"/>
<rect x="481" y="100" width="5" height="5" fill="#f8f490"/>
<rect x="489" y="100" width="5" height="5" fill="#f8f490"/>
<rect x="497" y="100" width="5" height="5" fill="#f8f490"/>
<rect x="473" y="107" width="5" height="5" fill="#f8f490"/>
<rect x="481" y="107" width="5" height="5" fill="#f8f490"/>
<rect x="489" y="107" width="5" height="5" fill="#f8f490"/>
<rect x="497" y="107" width="5" height="5" fill="#f8f490"/>
<rect x="471.5" y="90.5" width="32" height="31" fill="none" stroke="#ffffff"/>
<rect x="471" y="115" width="33" height="7" fill="#fff8e8"/>
<rect x="476" y="117" width="2" height="4" fill="#000050"/>
<rect x="473" y="117" width="1" height="3" fill="#a0c0c0"/>
<rect x="484" y="117" width="2" height="4" fill="#000050"/>
<rect x="481" y="117" width="1" height="3" fill="#a0c0c0"/>
<rect x="492" y="117" width="2" height="4" fill="#000050"/>
<rect x="489" y="117" width="1" height="3" fill="#a0c0c0"/>
<rect x="500" y="117" width="2" height="4" fill="#000050"/>
<rect x="497" y="117" width="1" height="3" fill="#a0c0c0"/>
<rect x="666" y="45" width="33" height="33" fill="#000"/>
<rect x="666" y="45" width="33" height="33" fill="url(#p6)"/>
<rect x="668" y="47" width="5" height="5" fill="#f8f490"/>
<rect x="676" y="47" width="5" height="5" fill="#f8f490"/>
<rect x="684" y="47" width="5" height="5" fill="#f8f490"/>
<rect x="692" y="47" width="5" height="5" fill="#f8f490"/>
<rect x="668" y="55" width="5" height="5" fill="#f8f490"/>
<rect x="676" y="55" width="5" height="5" fill="#f8f490"/>
<rect x="684" y="55" width="5" height="5" fill="#f8f490"/>
<rect x="692" y="55" width="5" height="5" fill="#f8f490"/>
<rect x="668" y="62" width="5" height="5" fill="#f8f490"/>
<rect x="676" y="62" width="5" height="5" fill="#f8f490"/>
<rect x="684" y="62" width="5" height="5" fill="#f8f490"/>
<rect x="692" y="62" width="5" height="5" fill="#f8f490"/>
<rect x="668" y="70" width="5" height="5" fill="#f8f490"/>
<rect x="676" y="70" width="5" height="5" fill="#f8f490"/>
<rect x="684" y="70" width="5" height="5" fill="#f8f490"/>
<rect x="692" y="70" width="5" height="5" fill="#f8f490"/>
<rect x="666.5" y="45.5" width="32" height="32" fill="none" stroke="#ffffff"/>
<rect x="604" y="23" width="1" height="20" fill="#f0f060"/>
<rect x="603" y="23" width="4" height="5" fill="#f0f060"/>
<rect x="604" y="25" width="1" height="1" fill="#202000"/>
<rect x="603" y="38" width="4" height="5" fill="#f0f060"/>
<rect x="604" y="40" width="1" height="1" fill="#202000"/>
<rect x="596" y="38" width="1" height="13" fill="#80a8c0"/>
<rect x="595" y="38" width="4" height="5" fill="#80a8c0"/>
<rect x="596" y="40" width="1" height="1" fill="#202000"/>
<rect x="595" y="46" width="4" height="5" fill="#80a8c0"/>
<rect x="596" y="48" width="1" height="1" fill="#202000"/>
<rect x="631" y="20" width="1" height="39" fill="#f0f060"/>
<rect x="630" y="54" width="4" height="5" fill="#f0f060"/>
<rect x="631" y="56" width="1" height="1" fill="#202000"/>
<rect x="639" y="20" width="1" height="31" fill="#f0f060"/>
<rect x="638" y="46" width="4" height="5" fill="#ffffe0"/>
<rect x="639" y="48" width="1" height="1" fill="#202000"/>
<rect x="806" y="82" width="1" height="31" fill="#f0f060"/>
<rect x="805" y="82" width="3" height="3" fill="#ffffe0"/>
<rect x="805" y="109" width="3" height="4" fill="#f0f060"/>
<rect x="245" y="66" width="1" height="38" fill="#f0f060"/>
<rect x="244" y="66" width="4" height="5" fill="#f0f000"/>
<rect x="245" y="68" width="1" height="1" fill="#202000"/>
<rect x="224" y="70" width="4" height="5" fill="#f0f000"/>
<rect x="225" y="72" width="1" height="1" fill="#202000"/>
<rect x="232" y="70" width="4" height="5" fill="#a0c8c0"/>
<rect x="233" y="72" width="1" height="1" fill="#202000"/>
<rect x="838" y="20" width="1" height="64" fill="#f0f060"/>
<rect x="838.5" y="48.5" width="5" height="35" fill="none" stroke="#ffffff"/>
<rect x="323" y="20" width="1" height="712" fill="#78c4e0"/>
<rect x="331" y="20" width="1" height="712" fill="#78c4e0"/>
<rect x="311" y="162" width="531" height="1" fill="#58e0f0"/>
<rect x="311" y="162" width="1" height="570" fill="#58e0f0"/>
<rect x="841" y="20" width="1" height="712" fill="#58e0f0"/>
<rect x="126" y="731" width="716" height="1" fill="#58e0f0"/>
<rect x="126" y="715" width="65" height="1" fill="#58e0f0"/>
<rect x="190" y="715" width="1" height="17" fill="#58e0f0"/>
<rect x="126" y="504" width="38" height="1" fill="#70e0d0"/>
<rect x="126" y="539" width="38" height="1" fill="#70e0d0"/>
<rect x="272" y="103" width="571" height="1" fill="#f0f040"/>
<rect x="341" y="210" width="15" height="522" fill="url(#p7)"/>
<rect x="341" y="210" width="1" height="522" fill="#f0f028"/>
<rect x="355" y="210" width="1" height="522" fill="#f0f028"/>
<rect x="341" y="210" width="15" height="1" fill="#f0f028"/>
<rect x="382" y="210" width="14" height="522" fill="url(#p7)"/>
<rect x="382" y="210" width="1" height="522" fill="#f0f028"/>
<rect x="395" y="210" width="1" height="522" fill="#f0f028"/>
<rect x="382" y="210" width="14" height="1" fill="#f0f028"/>
<rect x="422" y="210" width="14" height="522" fill="url(#p7)"/>
<rect x="422" y="210" width="1" height="522" fill="#f0f028"/>
<rect x="435" y="210" width="1" height="522" fill="#f0f028"/>
<rect x="422" y="210" width="14" height="1" fill="#f0f028"/>
<rect x="462" y="210" width="14" height="522" fill="url(#p7)"/>
<rect x="462" y="210" width="1" height="522" fill="#f0f028"/>
<rect x="475" y="210" width="1" height="522" fill="#f0f028"/>
<rect x="462" y="210" width="14" height="1" fill="#f0f028"/>
<rect x="502" y="210" width="14" height="522" fill="url(#p7)"/>
<rect x="502" y="210" width="1" height="522" fill="#f0f028"/>
<rect x="515" y="210" width="1" height="522" fill="#f0f028"/>
<rect x="502" y="210" width="14" height="1" fill="#f0f028"/>
<rect x="542" y="210" width="15" height="522" fill="url(#p7)"/>
<rect x="542" y="210" width="1" height="522" fill="#f0f028"/>
<rect x="556" y="210" width="1" height="522" fill="#f0f028"/>
<rect x="542" y="210" width="15" height="1" fill="#f0f028"/>
<rect x="582" y="210" width="15" height="522" fill="url(#p7)"/>
<rect x="582" y="210" width="1" height="522" fill="#f0f028"/>
<rect x="596" y="210" width="1" height="522" fill="#f0f028"/>
<rect x="582" y="210" width="15" height="1" fill="#f0f028"/>
<rect x="623" y="210" width="14" height="522" fill="url(#p7)"/>
<rect x="623" y="210" width="1" height="522" fill="#f0f028"/>
<rect x="636" y="210" width="1" height="522" fill="#f0f028"/>
<rect x="623" y="210" width="14" height="1" fill="#f0f028"/>
<rect x="663" y="210" width="14" height="522" fill="url(#p7)"/>
<rect x="663" y="210" width="1" height="522" fill="#f0f028"/>
<rect x="676" y="210" width="1" height="522" fill="#f0f028"/>
<rect x="663" y="210" width="14" height="1" fill="#f0f028"/>
<rect x="703" y="210" width="14" height="522" fill="url(#p7)"/>
<rect x="703" y="210" width="1" height="522" fill="#f0f028"/>
<rect x="716" y="210" width="1" height="522" fill="#f0f028"/>
<rect x="703" y="210" width="14" height="1" fill="#f0f028"/>
<rect x="743" y="210" width="14" height="522" fill="url(#p7)"/>
<rect x="743" y="210" width="1" height="522" fill="#f0f028"/>
<rect x="756" y="210" width="1" height="522" fill="#f0f028"/>
<rect x="743" y="210" width="14" height="1" fill="#f0f028"/>
<rect x="783" y="210" width="15" height="522" fill="url(#p7)"/>
<rect x="783" y="210" width="1" height="522" fill="#f0f028"/>
<rect x="797" y="210" width="1" height="522" fill="#f0f028"/>
<rect x="783" y="210" width="15" height="1" fill="#f0f028"/>
<rect x="823" y="210" width="15" height="522" fill="url(#p7)"/>
<rect x="823" y="210" width="1" height="522" fill="#f0f028"/>
<rect x="837" y="210" width="1" height="522" fill="#f0f028"/>
<rect x="823" y="210" width="15" height="1" fill="#f0f028"/>
<g style="mix-blend-mode:lighten">
<rect x="272" y="393" width="570" height="35" fill="url(#p0)"/>
<rect x="272" y="393" width="571" height="1" fill="#78c048"/>
<rect x="272" y="428" width="571" height="1" fill="#78c048"/>
<rect x="272" y="411" width="571" height="1" fill="#78c048"/>
<rect x="193" y="666" width="649" height="35" fill="url(#p0)"/>
<rect x="193" y="666" width="650" height="1" fill="#78c048"/>
<rect x="193" y="701" width="650" height="1" fill="#78c048"/>
<rect x="193" y="684" width="650" height="1" fill="#78c048"/>
</g>
<rect x="342" y="667" width="13" height="34" fill="#fff4f0"/>
<rect x="343" y="669" width="1" height="2" fill="#e09040"/>
<rect x="351" y="669" width="1" height="2" fill="#e09040"/>
<rect x="345" y="670" width="1" height="2" fill="#c05040"/>
<rect x="353" y="670" width="1" height="2" fill="#c05040"/>
<rect x="343" y="672" width="1" height="2" fill="#e09040"/>
<rect x="351" y="672" width="1" height="2" fill="#e09040"/>
<rect x="345" y="673" width="1" height="2" fill="#c05040"/>
<rect x="353" y="673" width="1" height="2" fill="#c05040"/>
<rect x="343" y="675" width="1" height="2" fill="#e09040"/>
<rect x="351" y="675" width="1" height="2" fill="#e09040"/>
<rect x="345" y="676" width="1" height="2" fill="#c05040"/>
<rect x="353" y="676" width="1" height="2" fill="#c05040"/>
<rect x="343" y="678" width="1" height="2" fill="#e09040"/>
<rect x="351" y="678" width="1" height="2" fill="#e09040"/>
<rect x="345" y="679" width="1" height="2" fill="#c05040"/>
<rect x="353" y="679" width="1" height="2" fill="#c05040"/>
<rect x="343" y="681" width="1" height="2" fill="#e09040"/>
<rect x="351" y="681" width="1" height="2" fill="#e09040"/>
<rect x="345" y="682" width="1" height="2" fill="#c05040"/>
<rect x="353" y="682" width="1" height="2" fill="#c05040"/>
<rect x="343" y="684" width="1" height="2" fill="#e09040"/>
<rect x="351" y="684" width="1" height="2" fill="#e09040"/>
<rect x="345" y="685" width="1" height="2" fill="#c05040"/>
<rect x="353" y="685" width="1" height="2" fill="#c05040"/>
<rect x="343" y="687" width="1" height="2" fill="#e09040"/>
<rect x="351" y="687" width="1" height="2" fill="#e09040"/>
<rect x="345" y="688" width="1" height="2" fill="#c05040"/>
<rect x="353" y="688" width="1" height="2" fill="#c05040"/>
<rect x="343" y="690" width="1" height="2" fill="#e09040"/>
<rect x="351" y="690" width="1" height="2" fill="#e09040"/>
<rect x="345" y="691" width="1" height="2" fill="#c05040"/>
<rect x="353" y="691" width="1" height="2" fill="#c05040"/>
<rect x="343" y="693" width="1" height="2" fill="#e09040"/>
<rect x="351" y="693" width="1" height="2" fill="#e09040"/>
<rect x="345" y="694" width="1" height="2" fill="#c05040"/>
<rect x="353" y="694" width="1" height="2" fill="#c05040"/>
<rect x="343" y="696" width="1" height="2" fill="#e09040"/>
<rect x="351" y="696" width="1" height="2" fill="#e09040"/>
<rect x="345" y="697" width="1" height="2" fill="#c05040"/>
<rect x="353" y="697" width="1" height="2" fill="#c05040"/>
<rect x="347" y="671" width="4" height="4" fill="#60b828"/>
<rect x="343" y="676" width="1" height="2" fill="#200800"/>
<rect x="345" y="676" width="1" height="2" fill="#200800"/>
<rect x="347" y="676" width="1" height="2" fill="#200800"/>
<rect x="349" y="676" width="1" height="2" fill="#200800"/>
<rect x="351" y="676" width="1" height="2" fill="#200800"/>
<rect x="353" y="676" width="1" height="2" fill="#200800"/>
<rect x="347" y="679" width="4" height="4" fill="#60b828"/>
<rect x="343" y="684" width="1" height="2" fill="#200800"/>
<rect x="345" y="684" width="1" height="2" fill="#200800"/>
<rect x="347" y="684" width="1" height="2" fill="#200800"/>
<rect x="349" y="684" width="1" height="2" fill="#200800"/>
<rect x="351" y="684" width="1" height="2" fill="#200800"/>
<rect x="353" y="684" width="1" height="2" fill="#200800"/>
<rect x="347" y="686" width="4" height="4" fill="#60b828"/>
<rect x="343" y="691" width="1" height="2" fill="#200800"/>
<rect x="345" y="691" width="1" height="2" fill="#200800"/>
<rect x="347" y="691" width="1" height="2" fill="#200800"/>
<rect x="349" y="691" width="1" height="2" fill="#200800"/>
<rect x="351" y="691" width="1" height="2" fill="#200800"/>
<rect x="353" y="691" width="1" height="2" fill="#200800"/>
<rect x="347" y="694" width="4" height="4" fill="#60b828"/>
<rect x="343" y="668" width="11" height="1" fill="#58a058"/>
<rect x="343" y="699" width="11" height="1" fill="#58a058"/>
<rect x="383" y="394" width="12" height="34" fill="#fff4f0"/>
<rect x="384" y="396" width="1" height="2" fill="#e09040"/>
<rect x="391" y="396" width="1" height="2" fill="#e09040"/>
<rect x="386" y="397" width="1" height="2" fill="#c05040"/>
<rect x="393" y="397" width="1" height="2" fill="#c05040"/>
<rect x="384" y="399" width="1" height="2" fill="#e09040"/>
<rect x="391" y="399" width="1" height="2" fill="#e09040"/>
<rect x="386" y="400" width="1" height="2" fill="#c05040"/>
<rect x="393" y="400" width="1" height="2" fill="#c05040"/>
<rect x="384" y="402" width="1" height="2" fill="#e09040"/>
<rect x="391" y="402" width="1" height="2" fill="#e09040"/>
<rect x="386" y="403" width="1" height="2" fill="#c05040"/>
<rect x="393" y="403" width="1" height="2" fill="#c05040"/>
<rect x="384" y="405" width="1" height="2" fill="#e09040"/>
<rect x="391" y="405" width="1" height="2" fill="#e09040"/>
<rect x="386" y="406" width="1" height="2" fill="#c05040"/>
<rect x="393" y="406" width="1" height="2" fill="#c05040"/>
<rect x="384" y="408" width="1" height="2" fill="#e09040"/>
<rect x="391" y="408" width="1" height="2" fill="#e09040"/>
<rect x="386" y="409" width="1" height="2" fill="#c05040"/>
<rect x="393" y="409" width="1" height="2" fill="#c05040"/>
<rect x="384" y="411" width="1" height="2" fill="#e09040"/>
<rect x="391" y="411" width="1" height="2" fill="#e09040"/>
<rect x="386" y="412" width="1" height="2" fill="#c05040"/>
<rect x="393" y="412" width="1" height="2" fill="#c05040"/>
<rect x="384" y="414" width="1" height="2" fill="#e09040"/>
<rect x="391" y="414" width="1" height="2" fill="#e09040"/>
<rect x="386" y="415" width="1" height="2" fill="#c05040"/>
<rect x="393" y="415" width="1" height="2" fill="#c05040"/>
<rect x="384" y="417" width="1" height="2" fill="#e09040"/>
<rect x="391" y="417" width="1" height="2" fill="#e09040"/>
<rect x="386" y="418" width="1" height="2" fill="#c05040"/>
<rect x="393" y="418" width="1" height="2" fill="#c05040"/>
<rect x="384" y="420" width="1" height="2" fill="#e09040"/>
<rect x="391" y="420" width="1" height="2" fill="#e09040"/>
<rect x="386" y="421" width="1" height="2" fill="#c05040"/>
<rect x="393" y="421" width="1" height="2" fill="#c05040"/>
<rect x="384" y="423" width="1" height="2" fill="#e09040"/>
<rect x="391" y="423" width="1" height="2" fill="#e09040"/>
<rect x="386" y="424" width="1" height="2" fill="#c05040"/>
<rect x="393" y="424" width="1" height="2" fill="#c05040"/>
<rect x="388" y="398" width="4" height="4" fill="#60b828"/>
<rect x="384" y="403" width="1" height="2" fill="#200800"/>
<rect x="386" y="403" width="1" height="2" fill="#200800"/>
<rect x="388" y="403" width="1" height="2" fill="#200800"/>
<rect x="390" y="403" width="1" height="2" fill="#200800"/>
<rect x="392" y="403" width="1" height="2" fill="#200800"/>
<rect x="388" y="406" width="4" height="4" fill="#60b828"/>
<rect x="384" y="411" width="1" height="2" fill="#200800"/>
<rect x="386" y="411" width="1" height="2" fill="#200800"/>
<rect x="388" y="411" width="1" height="2" fill="#200800"/>
<rect x="390" y="411" width="1" height="2" fill="#200800"/>
<rect x="392" y="411" width="1" height="2" fill="#200800"/>
<rect x="388" y="413" width="4" height="4" fill="#60b828"/>
<rect x="384" y="418" width="1" height="2" fill="#200800"/>
<rect x="386" y="418" width="1" height="2" fill="#200800"/>
<rect x="388" y="418" width="1" height="2" fill="#200800"/>
<rect x="390" y="418" width="1" height="2" fill="#200800"/>
<rect x="392" y="418" width="1" height="2" fill="#200800"/>
<rect x="388" y="421" width="4" height="4" fill="#60b828"/>
<rect x="384" y="395" width="10" height="1" fill="#58a058"/>
<rect x="384" y="426" width="10" height="1" fill="#58a058"/>
<rect x="423" y="667" width="12" height="34" fill="#fff4f0"/>
<rect x="424" y="669" width="1" height="2" fill="#e09040"/>
<rect x="431" y="669" width="1" height="2" fill="#e09040"/>
<rect x="426" y="670" width="1" height="2" fill="#c05040"/>
<rect x="433" y="670" width="1" height="2" fill="#c05040"/>
<rect x="424" y="672" width="1" height="2" fill="#e09040"/>
<rect x="431" y="672" width="1" height="2" fill="#e09040"/>
<rect x="426" y="673" width="1" height="2" fill="#c05040"/>
<rect x="433" y="673" width="1" height="2" fill="#c05040"/>
<rect x="424" y="675" width="1" height="2" fill="#e09040"/>
<rect x="431" y="675" width="1" height="2" fill="#e09040"/>
<rect x="426" y="676" width="1" height="2" fill="#c05040"/>
<rect x="433" y="676" width="1" height="2" fill="#c05040"/>
<rect x="424" y="678" width="1" height="2" fill="#e09040"/>
<rect x="431" y="678" width="1" height="2" fill="#e09040"/>
<rect x="426" y="679" width="1" height="2" fill="#c05040"/>
<rect x="433" y="679" width="1" height="2" fill="#c05040"/>
<rect x="424" y="681" width="1" height="2" fill="#e09040"/>
<rect x="431" y="681" width="1" height="2" fill="#e09040"/>
<rect x="426" y="682" width="1" height="2" fill="#c05040"/>
<rect x="433" y="682" width="1" height="2" fill="#c05040"/>
<rect x="424" y="684" width="1" height="2" fill="#e09040"/>
<rect x="431" y="684" width="1" height="2" fill="#e09040"/>
<rect x="426" y="685" width="1" height="2" fill="#c05040"/>
<rect x="433" y="685" width="1" height="2" fill="#c05040"/>
<rect x="424" y="687" width="1" height="2" fill="#e09040"/>
<rect x="431" y="687" width="1" height="2" fill="#e09040"/>
<rect x="426" y="688" width="1" height="2" fill="#c05040"/>
<rect x="433" y="688" width="1" height="2" fill="#c05040"/>
<rect x="424" y="690" width="1" height="2" fill="#e09040"/>
<rect x="431" y="690" width="1" height="2" fill="#e09040"/>
<rect x="426" y="691" width="1" height="2" fill="#c05040"/>
<rect x="433" y="691" width="1" height="2" fill="#c05040"/>
<rect x="424" y="693" width="1" height="2" fill="#e09040"/>
<rect x="431" y="693" width="1" height="2" fill="#e09040"/>
<rect x="426" y="694" width="1" height="2" fill="#c05040"/>
<rect x="433" y="694" width="1" height="2" fill="#c05040"/>
<rect x="424" y="696" width="1" height="2" fill="#e09040"/>
<rect x="431" y="696" width="1" height="2" fill="#e09040"/>
<rect x="426" y="697" width="1" height="2" fill="#c05040"/>
<rect x="433" y="697" width="1" height="2" fill="#c05040"/>
<rect x="428" y="671" width="4" height="4" fill="#60b828"/>
<rect x="424" y="676" width="1" height="2" fill="#200800"/>
<rect x="426" y="676" width="1" height="2" fill="#200800"/>
<rect x="428" y="676" width="1" height="2" fill="#200800"/>
<rect x="430" y="676" width="1" height="2" fill="#200800"/>
<rect x="432" y="676" width="1" height="2" fill="#200800"/>
<rect x="428" y="679" width="4" height="4" fill="#60b828"/>
<rect x="424" y="684" width="1" height="2" fill="#200800"/>
<rect x="426" y="684" width="1" height="2" fill="#200800"/>
<rect x="428" y="684" width="1" height="2" fill="#200800"/>
<rect x="430" y="684" width="1" height="2" fill="#200800"/>
<rect x="432" y="684" width="1" height="2" fill="#200800"/>
<rect x="428" y="686" width="4" height="4" fill="#60b828"/>
<rect x="424" y="691" width="1" height="2" fill="#200800"/>
<rect x="426" y="691" width="1" height="2" fill="#200800"/>
<rect x="428" y="691" width="1" height="2" fill="#200800"/>
<rect x="430" y="691" width="1" height="2" fill="#200800"/>
<rect x="432" y="691" width="1" height="2" fill="#200800"/>
<rect x="428" y="694" width="4" height="4" fill="#60b828"/>
<rect x="424" y="668" width="10" height="1" fill="#58a058"/>
<rect x="424" y="699" width="10" height="1" fill="#58a058"/>
<rect x="463" y="394" width="12" height="34" fill="#fff4f0"/>
<rect x="464" y="396" width="1" height="2" fill="#e09040"/>
<rect x="471" y="396" width="1" height="2" fill="#e09040"/>
<rect x="466" y="397" width="1" height="2" fill="#c05040"/>
<rect x="473" y="397" width="1" height="2" fill="#c05040"/>
<rect x="464" y="399" width="1" height="2" fill="#e09040"/>
<rect x="471" y="399" width="1" height="2" fill="#e09040"/>
<rect x="466" y="400" width="1" height="2" fill="#c05040"/>
<rect x="473" y="400" width="1" height="2" fill="#c05040"/>
<rect x="464" y="402" width="1" height="2" fill="#e09040"/>
<rect x="471" y="402" width="1" height="2" fill="#e09040"/>
<rect x="466" y="403" width="1" height="2" fill="#c05040"/>
<rect x="473" y="403" width="1" height="2" fill="#c05040"/>
<rect x="464" y="405" width="1" height="2" fill="#e09040"/>
<rect x="471" y="405" width="1" height="2" fill="#e09040"/>
<rect x="466" y="406" width="1" height="2" fill="#c05040"/>
<rect x="473" y="406" width="1" height="2" fill="#c05040"/>
<rect x="464" y="408" width="1" height="2" fill="#e09040"/>
<rect x="471" y="408" width="1" height="2" fill="#e09040"/>
<rect x="466" y="409" width="1" height="2" fill="#c05040"/>
<rect x="473" y="409" width="1" height="2" fill="#c05040"/>
<rect x="464" y="411" width="1" height="2" fill="#e09040"/>
<rect x="471" y="411" width="1" height="2" fill="#e09040"/>
<rect x="466" y="412" width="1" height="2" fill="#c05040"/>
<rect x="473" y="412" width="1" height="2" fill="#c05040"/>
<rect x="464" y="414" width="1" height="2" fill="#e09040"/>
<rect x="471" y="414" width="1" height="2" fill="#e09040"/>
<rect x="466" y="415" width="1" height="2" fill="#c05040"/>
<rect x="473" y="415" width="1" height="2" fill="#c05040"/>
<rect x="464" y="417" width="1" height="2" fill="#e09040"/>
<rect x="471" y="417" width="1" height="2" fill="#e09040"/>
<rect x="466" y="418" width="1" height="2" fill="#c05040"/>
<rect x="473" y="418" width="1" height="2" fill="#c05040"/>
<rect x="464" y="420" width="1" height="2" fill="#e09040"/>
<rect x="471" y="420" width="1" height="2" fill="#e09040"/>
<rect x="466" y="421" width="1" height="2" fill="#c05040"/>
<rect x="473" y="421" width="1" height="2" fill="#c05040"/>
<rect x="464" y="423" width="1" height="2" fill="#e09040"/>
<rect x="471" y="423" width="1" height="2" fill="#e09040"/>
<rect x="466" y="424" width="1" height="2" fill="#c05040"/>
<rect x="473" y="424" width="1" height="2" fill="#c05040"/>
<rect x="468" y="398" width="4" height="4" fill="#60b828"/>
<rect x="464" y="403" width="1" height="2" fill="#200800"/>
<rect x="466" y="403" width="1" height="2" fill="#200800"/>
<rect x="468" y="403" width="1" height="2" fill="#200800"/>
<rect x="470" y="403" width="1" height="2" fill="#200800"/>
<rect x="472" y="403" width="1" height="2" fill="#200800"/>
<rect x="468" y="406" width="4" height="4" fill="#60b828"/>
<rect x="464" y="411" width="1" height="2" fill="#200800"/>
<rect x="466" y="411" width="1" height="2" fill="#200800"/>
<rect x="468" y="411" width="1" height="2" fill="#200800"/>
<rect x="470" y="411" width="1" height="2" fill="#200800"/>
<rect x="472" y="411" width="1" height="2" fill="#200800"/>
<rect x="468" y="413" width="4" height="4" fill="#60b828"/>
<rect x="464" y="418" width="1" height="2" fill="#200800"/>
<rect x="466" y="418" width="1" height="2" fill="#200800"/>
<rect x="468" y="418" width="1" height="2" fill="#200800"/>
<rect x="470" y="418" width="1" height="2" fill="#200800"/>
<rect x="472" y="418" width="1" height="2" fill="#200800"/>
<rect x="468" y="421" width="4" height="4" fill="#60b828"/>
<rect x="464" y="395" width="10" height="1" fill="#58a058"/>
<rect x="464" y="426" width="10" height="1" fill="#58a058"/>
<rect x="503" y="667" width="12" height="34" fill="#fff4f0"/>
<rect x="504" y="669" width="1" height="2" fill="#e09040"/>
<rect x="511" y="669" width="1" height="2" fill="#e09040"/>
<rect x="506" y="670" width="1" height="2" fill="#c05040"/>
<rect x="513" y="670" width="1" height="2" fill="#c05040"/>
<rect x="504" y="672" width="1" height="2" fill="#e09040"/>
<rect x="511" y="672" width="1" height="2" fill="#e09040"/>
<rect x="506" y="673" width="1" height="2" fill="#c05040"/>
<rect x="513" y="673" width="1" height="2" fill="#c05040"/>
<rect x="504" y="675" width="1" height="2" fill="#e09040"/>
<rect x="511" y="675" width="1" height="2" fill="#e09040"/>
<rect x="506" y="676" width="1" height="2" fill="#c05040"/>
<rect x="513" y="676" width="1" height="2" fill="#c05040"/>
<rect x="504" y="678" width="1" height="2" fill="#e09040"/>
<rect x="511" y="678" width="1" height="2" fill="#e09040"/>
<rect x="506" y="679" width="1" height="2" fill="#c05040"/>
<rect x="513" y="679" width="1" height="2" fill="#c05040"/>
<rect x="504" y="681" width="1" height="2" fill="#e09040"/>
<rect x="511" y="681" width="1" height="2" fill="#e09040"/>
<rect x="506" y="682" width="1" height="2" fill="#c05040"/>
<rect x="513" y="682" width="1" height="2" fill="#c05040"/>
<rect x="504" y="684" width="1" height="2" fill="#e09040"/>
<rect x="511" y="684" width="1" height="2" fill="#e09040"/>
<rect x="506" y="685" width="1" height="2" fill="#c05040"/>
<rect x="513" y="685" width="1" height="2" fill="#c05040"/>
<rect x="504" y="687" width="1" height="2" fill="#e09040"/>
<rect x="511" y="687" width="1" height="2" fill="#e09040"/>
<rect x="506" y="688" width="1" height="2" fill="#c05040"/>
<rect x="513" y="688" width="1" height="2" fill="#c05040"/>
<rect x="504" y="690" width="1" height="2" fill="#e09040"/>
<rect x="511" y="690" width="1" height="2" fill="#e09040"/>
<rect x="506" y="691" width="1" height="2" fill="#c05040"/>
<rect x="513" y="691" width="1" height="2" fill="#c05040"/>
<rect x="504" y="693" width="1" height="2" fill="#e09040"/>
<rect x="511" y="693" width="1" height="2" fill="#e09040"/>
<rect x="506" y="694" width="1" height="2" fill="#c05040"/>
<rect x="513" y="694" width="1" height="2" fill="#c05040"/>
<rect x="504" y="696" width="1" height="2" fill="#e09040"/>
<rect x="511" y="696" width="1" height="2" fill="#e09040"/>
<rect x="506" y="697" width="1" height="2" fill="#c05040"/>
<rect x="513" y="697" width="1" height="2" fill="#c05040"/>
<rect x="508" y="671" width="4" height="4" fill="#60b828"/>
<rect x="504" y="676" width="1" height="2" fill="#200800"/>
<rect x="506" y="676" width="1" height="2" fill="#200800"/>
<rect x="508" y="676" width="1" height="2" fill="#200800"/>
<rect x="510" y="676" width="1" height="2" fill="#200800"/>
<rect x="512" y="676" width="1" height="2" fill="#200800"/>
<rect x="508" y="679" width="4" height="4" fill="#60b828"/>
<rect x="504" y="684" width="1" height="2" fill="#200800"/>
<rect x="506" y="684" width="1" height="2" fill="#200800"/>
<rect x="508" y="684" width="1" height="2" fill="#200800"/>
<rect x="510" y="684" width="1" height="2" fill="#200800"/>
<rect x="512" y="684" width="1" height="2" fill="#200800"/>
<rect x="508" y="686" width="4" height="4" fill="#60b828"/>
<rect x="504" y="691" width="1" height="2" fill="#200800"/>
<rect x="506" y="691" width="1" height="2" fill="#200800"/>
<rect x="508" y="691" width="1" height="2" fill="#200800"/>
<rect x="510" y="691" width="1" height="2" fill="#200800"/>
<rect x="512" y="691" width="1" height="2" fill="#200800"/>
<rect x="508" y="694" width="4" height="4" fill="#60b828"/>
<rect x="504" y="668" width="10" height="1" fill="#58a058"/>
<rect x="504" y="699" width="10" height="1" fill="#58a058"/>
<rect x="543" y="394" width="13" height="34" fill="#fff4f0"/>
<rect x="544" y="396" width="1" height="2" fill="#e09040"/>
<rect x="552" y="396" width="1" height="2" fill="#e09040"/>
<rect x="546" y="397" width="1" height="2" fill="#c05040"/>
<rect x="554" y="397" width="1" height="2" fill="#c05040"/>
<rect x="544" y="399" width="1" height="2" fill="#e09040"/>
<rect x="552" y="399" width="1" height="2" fill="#e09040"/>
<rect x="546" y="400" width="1" height="2" fill="#c05040"/>
<rect x="554" y="400" width="1" height="2" fill="#c05040"/>
<rect x="544" y="402" width="1" height="2" fill="#e09040"/>
<rect x="552" y="402" width="1" height="2" fill="#e09040"/>
<rect x="546" y="403" width="1" height="2" fill="#c05040"/>
<rect x="554" y="403" width="1" height="2" fill="#c05040"/>
<rect x="544" y="405" width="1" height="2" fill="#e09040"/>
<rect x="552" y="405" width="1" height="2" fill="#e09040"/>
<rect x="546" y="406" width="1" height="2" fill="#c05040"/>
<rect x="554" y="406" width="1" height="2" fill="#c05040"/>
<rect x="544" y="408" width="1" height="2" fill="#e09040"/>
<rect x="552" y="408" width="1" height="2" fill="#e09040"/>
<rect x="546" y="409" width="1" height="2" fill="#c05040"/>
<rect x="554" y="409" width="1" height="2" fill="#c05040"/>
<rect x="544" y="411" width="1" height="2" fill="#e09040"/>
<rect x="552" y="411" width="1" height="2" fill="#e09040"/>
<rect x="546" y="412" width="1" height="2" fill="#c05040"/>
<rect x="554" y="412" width="1" height="2" fill="#c05040"/>
<rect x="544" y="414" width="1" height="2" fill="#e09040"/>
<rect x="552" y="414" width="1" height="2" fill="#e09040"/>
<rect x="546" y="415" width="1" height="2" fill="#c05040"/>
<rect x="554" y="415" width="1" height="2" fill="#c05040"/>
<rect x="544" y="417" width="1" height="2" fill="#e09040"/>
<rect x="552" y="417" width="1" height="2" fill="#e09040"/>
<rect x="546" y="418" width="1" height="2" fill="#c05040"/>
<rect x="554" y="418" width="1" height="2" fill="#c05040"/>
<rect x="544" y="420" width="1" height="2" fill="#e09040"/>
<rect x="552" y="420" width="1" height="2" fill="#e09040"/>
<rect x="546" y="421" width="1" height="2" fill="#c05040"/>
<rect x="554" y="421" width="1" height="2" fill="#c05040"/>
<rect x="544" y="423" width="1" height="2" fill="#e09040"/>
<rect x="552" y="423" width="1" height="2" fill="#e09040"/>
<rect x="546" y="424" width="1" height="2" fill="#c05040"/>
<rect x="554" y="424" width="1" height="2" fill="#c05040"/>
<rect x="548" y="398" width="4" height="4" fill="#60b828"/>
<rect x="544" y="403" width="1" height="2" fill="#200800"/>
<rect x="546" y="403" width="1" height="2" fill="#200800"/>
<rect x="548" y="403" width="1" height="2" fill="#200800"/>
<rect x="550" y="403" width="1" height="2" fill="#200800"/>
<rect x="552" y="403" width="1" height="2" fill="#200800"/>
<rect x="554" y="403" width="1" height="2" fill="#200800"/>
<rect x="548" y="406" width="4" height="4" fill="#60b828"/>
<rect x="544" y="411" width="1" height="2" fill="#200800"/>
<rect x="546" y="411" width="1" height="2" fill="#200800"/>
<rect x="548" y="411" width="1" height="2" fill="#200800"/>
<rect x="550" y="411" width="1" height="2" fill="#200800"/>
<rect x="552" y="411" width="1" height="2" fill="#200800"/>
<rect x="554" y="411" width="1" height="2" fill="#200800"/>
<rect x="548" y="413" width="4" height="4" fill="#60b828"/>
<rect x="544" y="418" width="1" height="2" fill="#200800"/>
<rect x="546" y="418" width="1" height="2" fill="#200800"/>
<rect x="548" y="418" width="1" height="2" fill="#200800"/>
<rect x="550" y="418" width="1" height="2" fill="#200800"/>
<rect x="552" y="418" width="1" height="2" fill="#200800"/>
<rect x="554" y="418" width="1" height="2" fill="#200800"/>
<rect x="548" y="421" width="4" height="4" fill="#60b828"/>
<rect x="544" y="395" width="11" height="1" fill="#58a058"/>
<rect x="544" y="426" width="11" height="1" fill="#58a058"/>
<rect x="583" y="667" width="13" height="34" fill="#fff4f0"/>
<rect x="584" y="669" width="1" height="2" fill="#e09040"/>
<rect x="592" y="669" width="1" height="2" fill="#e09040"/>
<rect x="586" y="670" width="1" height="2" fill="#c05040"/>
<rect x="594" y="670" width="1" height="2" fill="#c05040"/>
<rect x="584" y="672" width="1" height="2" fill="#e09040"/>
<rect x="592" y="672" width="1" height="2" fill="#e09040"/>
<rect x="586" y="673" width="1" height="2" fill="#c05040"/>
<rect x="594" y="673" width="1" height="2" fill="#c05040"/>
<rect x="584" y="675" width="1" height="2" fill="#e09040"/>
<rect x="592" y="675" width="1" height="2" fill="#e09040"/>
<rect x="586" y="676" width="1" height="2" fill="#c05040"/>
<rect x="594" y="676" width="1" height="2" fill="#c05040"/>
<rect x="584" y="678" width="1" height="2" fill="#e09040"/>
<rect x="592" y="678" width="1" height="2" fill="#e09040"/>
<rect x="586" y="679" width="1" height="2" fill="#c05040"/>
<rect x="594" y="679" width="1" height="2" fill="#c05040"/>
<rect x="584" y="681" width="1" height="2" fill="#e09040"/>
<rect x="592" y="681" width="1" height="2" fill="#e09040"/>
<rect x="586" y="682" width="1" height="2" fill="#c05040"/>
<rect x="594" y="682" width="1" height="2" fill="#c05040"/>
<rect x="584" y="684" width="1" height="2" fill="#e09040"/>
<rect x="592" y="684" width="1" height="2" fill="#e09040"/>
<rect x="586" y="685" width="1" height="2" fill="#c05040"/>
<rect x="594" y="685" width="1" height="2" fill="#c05040"/>
<rect x="584" y="687" width="1" height="2" fill="#e09040"/>
<rect x="592" y="687" width="1" height="2" fill="#e09040"/>
<rect x="586" y="688" width="1" height="2" fill="#c05040"/>
<rect x="594" y="688" width="1" height="2" fill="#c05040"/>
<rect x="584" y="690" width="1" height="2" fill="#e09040"/>
<rect x="592" y="690" width="1" height="2" fill="#e09040"/>
<rect x="586" y="691" width="1" height="2" fill="#c05040"/>
<rect x="594" y="691" width="1" height="2" fill="#c05040"/>
<rect x="584" y="693" width="1" height="2" fill="#e09040"/>
<rect x="592" y="693" width="1" height="2" fill="#e09040"/>
<rect x="586" y="694" width="1" height="2" fill="#c05040"/>
<rect x="594" y="694" width="1" height="2" fill="#c05040"/>
<rect x="584" y="696" width="1" height="2" fill="#e09040"/>
<rect x="592" y="696" width="1" height="2" fill="#e09040"/>
<rect x="586" y="697" width="1" height="2" fill="#c05040"/>
<rect x="594" y="697" width="1" height="2" fill="#c05040"/>
<rect x="588" y="671" width="4" height="4" fill="#60b828"/>
<rect x="584" y="676" width="1" height="2" fill="#200800"/>
<rect x="586" y="676" width="1" height="2" fill="#200800"/>
<rect x="588" y="676" width="1" height="2" fill="#200800"/>
<rect x="590" y="676" width="1" height="2" fill="#200800"/>
<rect x="592" y="676" width="1" height="2" fill="#200800"/>
<rect x="594" y="676" width="1" height="2" fill="#200800"/>
<rect x="588" y="679" width="4" height="4" fill="#60b828"/>
<rect x="584" y="684" width="1" height="2" fill="#200800"/>
<rect x="586" y="684" width="1" height="2" fill="#200800"/>
<rect x="588" y="684" width="1" height="2" fill="#200800"/>
<rect x="590" y="684" width="1" height="2" fill="#200800"/>
<rect x="592" y="684" width="1" height="2" fill="#200800"/>
<rect x="594" y="684" width="1" height="2" fill="#200800"/>
<rect x="588" y="686" width="4" height="4" fill="#60b828"/>
<rect x="584" y="691" width="1" height="2" fill="#200800"/>
<rect x="586" y="691" width="1" height="2" fill="#200800"/>
<rect x="588" y="691" width="1" height="2" fill="#200800"/>
<rect x="590" y="691" width="1" height="2" fill="#200800"/>
<rect x="592" y="691" width="1" height="2" fill="#200800"/>
<rect x="594" y="691" width="1" height="2" fill="#200800"/>
<rect x="588" y="694" width="4" height="4" fill="#60b828"/>
<rect x="584" y="668" width="11" height="1" fill="#58a058"/>
<rect x="584" y="699" width="11" height="1" fill="#58a058"/>
<rect x="624" y="394" width="12" height="34" fill="#fff4f0"/>
<rect x="625" y="396" width="1" height="2" fill="#e09040"/>
<rect x="632" y="396" width="1" height="2" fill="#e09040"/>
<rect x="627" y="397" width="1" height="2" fill="#c05040"/>
<rect x="634" y="397" width="1" height="2" fill="#c05040"/>
<rect x="625" y="399" width="1" height="2" fill="#e09040"/>
<rect x="632" y="399" width="1" height="2" fill="#e09040"/>
<rect x="627" y="400" width="1" height="2" fill="#c05040"/>
<rect x="634" y="400" width="1" height="2" fill="#c05040"/>
<rect x="625" y="402" width="1" height="2" fill="#e09040"/>
<rect x="632" y="402" width="1" height="2" fill="#e09040"/>
<rect x="627" y="403" width="1" height="2" fill="#c05040"/>
<rect x="634" y="403" width="1" height="2" fill="#c05040"/>
<rect x="625" y="405" width="1" height="2" fill="#e09040"/>
<rect x="632" y="405" width="1" height="2" fill="#e09040"/>
<rect x="627" y="406" width="1" height="2" fill="#c05040"/>
<rect x="634" y="406" width="1" height="2" fill="#c05040"/>
<rect x="625" y="408" width="1" height="2" fill="#e09040"/>
<rect x="632" y="408" width="1" height="2" fill="#e09040"/>
<rect x="627" y="409" width="1" height="2" fill="#c05040"/>
<rect x="634" y="409" width="1" height="2" fill="#c05040"/>
<rect x="625" y="411" width="1" height="2" fill="#e09040"/>
<rect x="632" y="411" width="1" height="2" fill="#e09040"/>
<rect x="627" y="412" width="1" height="2" fill="#c05040"/>
<rect x="634" y="412" width="1" height="2" fill="#c05040"/>
<rect x="625" y="414" width="1" height="2" fill="#e09040"/>
<rect x="632" y="414" width="1" height="2" fill="#e09040"/>
<rect x="627" y="415" width="1" height="2" fill="#c05040"/>
<rect x="634" y="415" width="1" height="2" fill="#c05040"/>
<rect x="625" y="417" width="1" height="2" fill="#e09040"/>
<rect x="632" y="417" width="1" height="2" fill="#e09040"/>
<rect x="627" y="418" width="1" height="2" fill="#c05040"/>
<rect x="634" y="418" width="1" height="2" fill="#c05040"/>
<rect x="625" y="420" width="1" height="2" fill="#e09040"/>
<rect x="632" y="420" width="1" height="2" fill="#e09040"/>
<rect x="627" y="421" width="1" height="2" fill="#c05040"/>
<rect x="634" y="421" width="1" height="2" fill="#c05040"/>
<rect x="625" y="423" width="1" height="2" fill="#e09040"/>
<rect x="632" y="423" width="1" height="2" fill="#e09040"/>
<rect x="627" y="424" width="1" height="2" fill="#c05040"/>
<rect x="634" y="424" width="1" height="2" fill="#c05040"/>
<rect x="629" y="398" width="4" height="4" fill="#60b828"/>
<rect x="625" y="403" width="1" height="2" fill="#200800"/>
<rect x="627" y="403" width="1" height="2" fill="#200800"/>
<rect x="629" y="403" width="1" height="2" fill="#200800"/>
<rect x="631" y="403" width="1" height="2" fill="#200800"/>
<rect x="633" y="403" width="1" height="2" fill="#200800"/>
<rect x="629" y="406" width="4" height="4" fill="#60b828"/>
<rect x="625" y="411" width="1" height="2" fill="#200800"/>
<rect x="627" y="411" width="1" height="2" fill="#200800"/>
<rect x="629" y="411" width="1" height="2" fill="#200800"/>
<rect x="631" y="411" width="1" height="2" fill="#200800"/>
<rect x="633" y="411" width="1" height="2" fill="#200800"/>
<rect x="629" y="413" width="4" height="4" fill="#60b828"/>
<rect x="625" y="418" width="1" height="2" fill="#200800"/>
<rect x="627" y="418" width="1" height="2" fill="#200800"/>
<rect x="629" y="418" width="1" height="2" fill="#200800"/>
<rect x="631" y="418" width="1" height="2" fill="#200800"/>
<rect x="633" y="418" width="1" height="2" fill="#200800"/>
<rect x="629" y="421" width="4" height="4" fill="#60b828"/>
<rect x="625" y="395" width="10" height="1" fill="#58a058"/>
<rect x="625" y="426" width="10" height="1" fill="#58a058"/>
<rect x="664" y="667" width="12" height="34" fill="#fff4f0"/>
<rect x="665" y="669" width="1" height="2" fill="#e09040"/>
<rect x="672" y="669" width="1" height="2" fill="#e09040"/>
<rect x="667" y="670" width="1" height="2" fill="#c05040"/>
<rect x="674" y="670" width="1" height="2" fill="#c05040"/>
<rect x="665" y="672" width="1" height="2" fill="#e09040"/>
<rect x="672" y="672" width="1" height="2" fill="#e09040"/>
<rect x="667" y="673" width="1" height="2" fill="#c05040"/>
<rect x="674" y="673" width="1" height="2" fill="#c05040"/>
<rect x="665" y="675" width="1" height="2" fill="#e09040"/>
<rect x="672" y="675" width="1" height="2" fill="#e09040"/>
<rect x="667" y="676" width="1" height="2" fill="#c05040"/>
<rect x="674" y="676" width="1" height="2" fill="#c05040"/>
<rect x="665" y="678" width="1" height="2" fill="#e09040"/>
<rect x="672" y="678" width="1" height="2" fill="#e09040"/>
<rect x="667" y="679" width="1" height="2" fill="#c05040"/>
<rect x="674" y="679" width="1" height="2" fill="#c05040"/>
<rect x="665" y="681" width="1" height="2" fill="#e09040"/>
<rect x="672" y="681" width="1" height="2" fill="#e09040"/>
<rect x="667" y="682" width="1" height="2" fill="#c05040"/>
<rect x="674" y="682" width="1" height="2" fill="#c05040"/>
<rect x="665" y="684" width="1" height="2" fill="#e09040"/>
<rect x="672" y="684" width="1" height="2" fill="#e09040"/>
<rect x="667" y="685" width="1" height="2" fill="#c05040"/>
<rect x="674" y="685" width="1" height="2" fill="#c05040"/>
<rect x="665" y="687" width="1" height="2" fill="#e09040"/>
<rect x="672" y="687" width="1" height="2" fill="#e09040"/>
<rect x="667" y="688" width="1" height="2" fill="#c05040"/>
<rect x="674" y="688" width="1" height="2" fill="#c05040"/>
<rect x="665" y="690" width="1" height="2" fill="#e09040"/>
<rect x="672" y="690" width="1" height="2" fill="#e09040"/>
<rect x="667" y="691" width="1" height="2" fill="#c05040"/>
<rect x="674" y="691" width="1" height="2" fill="#c05040"/>
<rect x="665" y="693" width="1" height="2" fill="#e09040"/>
<rect x="672" y="693" width="1" height="2" fill="#e09040"/>
<rect x="667" y="694" width="1" height="2" fill="#c05040"/>
<rect x="674" y="694" width="1" height="2" fill="#c05040"/>
<rect x="665" y="696" width="1" height="2" fill="#e09040"/>
<rect x="672" y="696" width="1" height="2" fill="#e09040"/>
<rect x="667" y="697" width="1" height="2" fill="#c05040"/>
<rect x="674" y="697" width="1" height="2" fill="#c05040"/>
<rect x="669" y="671" width="4" height="4" fill="#60b828"/>
<rect x="665" y="676" width="1" height="2" fill="#200800"/>
<rect x="667" y="676" width="1" height="2" fill="#200800"/>
<rect x="669" y="676" width="1" height="2" fill="#200800"/>
<rect x="671" y="676" width="1" height="2" fill="#200800"/>
<rect x="673" y="676" width="1" height="2" fill="#200800"/>
<rect x="669" y="679" width="4" height="4" fill="#60b828"/>
<rect x="665" y="684" width="1" height="2" fill="#200800"/>
<rect x="667" y="684" width="1" height="2" fill="#200800"/>
<rect x="669" y="684" width="1" height="2" fill="#200800"/>
<rect x="671" y="684" width="1" height="2" fill="#200800"/>
<rect x="673" y="684" width="1" height="2" fill="#200800"/>
<rect x="669" y="686" width="4" height="4" fill="#60b828"/>
<rect x="665" y="691" width="1" height="2" fill="#200800"/>
<rect x="667" y="691" width="1" height="2" fill="#200800"/>
<rect x="669" y="691" width="1" height="2" fill="#200800"/>
<rect x="671" y="691" width="1" height="2" fill="#200800"/>
<rect x="673" y="691" width="1" height="2" fill="#200800"/>
<rect x="669" y="694" width="4" height="4" fill="#60b828"/>
<rect x="665" y="668" width="10" height="1" fill="#58a058"/>
<rect x="665" y="699" width="10" height="1" fill="#58a058"/>
<rect x="704" y="394" width="12" height="34" fill="#fff4f0"/>
<rect x="705" y="396" width="1" height="2" fill="#e09040"/>
<rect x="712" y="396" width="1" height="2" fill="#e09040"/>
<rect x="707" y="397" width="1" height="2" fill="#c05040"/>
<rect x="714" y="397" width="1" height="2" fill="#c05040"/>
<rect x="705" y="399" width="1" height="2" fill="#e09040"/>
<rect x="712" y="399" width="1" height="2" fill="#e09040"/>
<rect x="707" y="400" width="1" height="2" fill="#c05040"/>
<rect x="714" y="400" width="1" height="2" fill="#c05040"/>
<rect x="705" y="402" width="1" height="2" fill="#e09040"/>
<rect x="712" y="402" width="1" height="2" fill="#e09040"/>
<rect x="707" y="403" width="1" height="2" fill="#c05040"/>
<rect x="714" y="403" width="1" height="2" fill="#c05040"/>
<rect x="705" y="405" width="1" height="2" fill="#e09040"/>
<rect x="712" y="405" width="1" height="2" fill="#e09040"/>
<rect x="707" y="406" width="1" height="2" fill="#c05040"/>
<rect x="714" y="406" width="1" height="2" fill="#c05040"/>
<rect x="705" y="408" width="1" height="2" fill="#e09040"/>
<rect x="712" y="408" width="1" height="2" fill="#e09040"/>
<rect x="707" y="409" width="1" height="2" fill="#c05040"/>
<rect x="714" y="409" width="1" height="2" fill="#c05040"/>
<rect x="705" y="411" width="1" height="2" fill="#e09040"/>
<rect x="712" y="411" width="1" height="2" fill="#e09040"/>
<rect x="707" y="412" width="1" height="2" fill="#c05040"/>
<rect x="714" y="412" width="1" height="2" fill="#c05040"/>
<rect x="705" y="414" width="1" height="2" fill="#e09040"/>
<rect x="712" y="414" width="1" height="2" fill="#e09040"/>
<rect x="707" y="415" width="1" height="2" fill="#c05040"/>
<rect x="714" y="415" width="1" height="2" fill="#c05040"/>
<rect x="705" y="417" width="1" height="2" fill="#e09040"/>
<rect x="712" y="417" width="1" height="2" fill="#e09040"/>
<rect x="707" y="418" width="1" height="2" fill="#c05040"/>
<rect x="714" y="418" width="1" height="2" fill="#c05040"/>
<rect x="705" y="420" width="1" height="2" fill="#e09040"/>
<rect x="712" y="420" width="1" height="2" fill="#e09040"/>
<rect x="707" y="421" width="1" height="2" fill="#c05040"/>
<rect x="714" y="421" width="1" height="2" fill="#c05040"/>
<rect x="705" y="423" width="1" height="2" fill="#e09040"/>
<rect x="712" y="423" width="1" height="2" fill="#e09040"/>
<rect x="707" y="424" width="1" height="2" fill="#c05040"/>
<rect x="714" y="424" width="1" height="2" fill="#c05040"/>
<rect x="709" y="398" width="4" height="4" fill="#60b828"/>
<rect x="705" y="403" width="1" height="2" fill="#200800"/>
<rect x="707" y="403" width="1" height="2" fill="#200800"/>
<rect x="709" y="403" width="1" height="2" fill="#200800"/>
<rect x="711" y="403" width="1" height="2" fill="#200800"/>
<rect x="713" y="403" width="1" height="2" fill="#200800"/>
<rect x="709" y="406" width="4" height="4" fill="#60b828"/>
<rect x="705" y="411" width="1" height="2" fill="#200800"/>
<rect x="707" y="411" width="1" height="2" fill="#200800"/>
<rect x="709" y="411" width="1" height="2" fill="#200800"/>
<rect x="711" y="411" width="1" height="2" fill="#200800"/>
<rect x="713" y="411" width="1" height="2" fill="#200800"/>
<rect x="709" y="413" width="4" height="4" fill="#60b828"/>
<rect x="705" y="418" width="1" height="2" fill="#200800"/>
<rect x="707" y="418" width="1" height="2" fill="#200800"/>
<rect x="709" y="418" width="1" height="2" fill="#200800"/>
<rect x="711" y="418" width="1" height="2" fill="#200800"/>
<rect x="713" y="418" width="1" height="2" fill="#200800"/>
<rect x="709" y="421" width="4" height="4" fill="#60b828"/>
<rect x="705" y="395" width="10" height="1" fill="#58a058"/>
<rect x="705" y="426" width="10" height="1" fill="#58a058"/>
<rect x="744" y="667" width="12" height="34" fill="#fff4f0"/>
<rect x="745" y="669" width="1" height="2" fill="#e09040"/>
<rect x="752" y="669" width="1" height="2" fill="#e09040"/>
<rect x="747" y="670" width="1" height="2" fill="#c05040"/>
<rect x="754" y="670" width="1" height="2" fill="#c05040"/>
<rect x="745" y="672" width="1" height="2" fill="#e09040"/>
<rect x="752" y="672" width="1" height="2" fill="#e09040"/>
<rect x="747" y="673" width="1" height="2" fill="#c05040"/>
<rect x="754" y="673" width="1" height="2" fill="#c05040"/>
<rect x="745" y="675" width="1" height="2" fill="#e09040"/>
<rect x="752" y="675" width="1" height="2" fill="#e09040"/>
<rect x="747" y="676" width="1" height="2" fill="#c05040"/>
<rect x="754" y="676" width="1" height="2" fill="#c05040"/>
<rect x="745" y="678" width="1" height="2" fill="#e09040"/>
<rect x="752" y="678" width="1" height="2" fill="#e09040"/>
<rect x="747" y="679" width="1" height="2" fill="#c05040"/>
<rect x="754" y="679" width="1" height="2" fill="#c05040"/>
<rect x="745" y="681" width="1" height="2" fill="#e09040"/>
<rect x="752" y="681" width="1" height="2" fill="#e09040"/>
<rect x="747" y="682" width="1" height="2" fill="#c05040"/>
<rect x="754" y="682" width="1" height="2" fill="#c05040"/>
<rect x="745" y="684" width="1" height="2" fill="#e09040"/>
<rect x="752" y="684" width="1" height="2" fill="#e09040"/>
<rect x="747" y="685" width="1" height="2" fill="#c05040"/>
<rect x="754" y="685" width="1" height="2" fill="#c05040"/>
<rect x="745" y="687" width="1" height="2" fill="#e09040"/>
<rect x="752" y="687" width="1" height="2" fill="#e09040"/>
<rect x="747" y="688" width="1" height="2" fill="#c05040"/>
<rect x="754" y="688" width="1" height="2" fill="#c05040"/>
<rect x="745" y="690" width="1" height="2" fill="#e09040"/>
<rect x="752" y="690" width="1" height="2" fill="#e09040"/>
<rect x="747" y="691" width="1" height="2" fill="#c05040"/>
<rect x="754" y="691" width="1" height="2" fill="#c05040"/>
<rect x="745" y="693" width="1" height="2" fill="#e09040"/>
<rect x="752" y="693" width="1" height="2" fill="#e09040"/>
<rect x="747" y="694" width="1" height="2" fill="#c05040"/>
<rect x="754" y="694" width="1" height="2" fill="#c05040"/>
<rect x="745" y="696" width="1" height="2" fill="#e09040"/>
<rect x="752" y="696" width="1" height="2" fill="#e09040"/>
<rect x="747" y="697" width="1" height="2" fill="#c05040"/>
<rect x="754" y="697" width="1" height="2" fill="#c05040"/>
<rect x="749" y="671" width="4" height="4" fill="#60b828"/>
<rect x="745" y="676" width="1" height="2" fill="#200800"/>
<rect x="747" y="676" width="1" height="2" fill="#200800"/>
<rect x="749" y="676" width="1" height="2" fill="#200800"/>
<rect x="751" y="676" width="1" height="2" fill="#200800"/>
<rect x="753" y="676" width="1" height="2" fill="#200800"/>
<rect x="749" y="679" width="4" height="4" fill="#60b828"/>
<rect x="745" y="684" width="1" height="2" fill="#200800"/>
<rect x="747" y="684" width="1" height="2" fill="#200800"/>
<rect x="749" y="684" width="1" height="2" fill="#200800"/>
<rect x="751" y="684" width="1" height="2" fill="#200800"/>
<rect x="753" y="684" width="1" height="2" fill="#200800"/>
<rect x="749" y="686" width="4" height="4" fill="#60b828"/>
<rect x="745" y="691" width="1" height="2" fill="#200800"/>
<rect x="747" y="691" width="1" height="2" fill="#200800"/>
<rect x="749" y="691" width="1" height="2" fill="#200800"/>
<rect x="751" y="691" width="1" height="2" fill="#200800"/>
<rect x="753" y="691" width="1" height="2" fill="#200800"/>
<rect x="749" y="694" width="4" height="4" fill="#60b828"/>
<rect x="745" y="668" width="10" height="1" fill="#58a058"/>
<rect x="745" y="699" width="10" height="1" fill="#58a058"/>
<rect x="784" y="394" width="13" height="34" fill="#fff4f0"/>
<rect x="785" y="396" width="1" height="2" fill="#e09040"/>
<rect x="793" y="396" width="1" height="2" fill="#e09040"/>
<rect x="787" y="397" width="1" height="2" fill="#c05040"/>
<rect x="795" y="397" width="1" height="2" fill="#c05040"/>
<rect x="785" y="399" width="1" height="2" fill="#e09040"/>
<rect x="793" y="399" width="1" height="2" fill="#e09040"/>
<rect x="787" y="400" width="1" height="2" fill="#c05040"/>
<rect x="795" y="400" width="1" height="2" fill="#c05040"/>
<rect x="785" y="402" width="1" height="2" fill="#e09040"/>
<rect x="793" y="402" width="1" height="2" fill="#e09040"/>
<rect x="787" y="403" width="1" height="2" fill="#c05040"/>
<rect x="795" y="403" width="1" height="2" fill="#c05040"/>
<rect x="785" y="405" width="1" height="2" fill="#e09040"/>
<rect x="793" y="405" width="1" height="2" fill="#e09040"/>
<rect x="787" y="406" width="1" height="2" fill="#c05040"/>
<rect x="795" y="406" width="1" height="2" fill="#c05040"/>
<rect x="785" y="408" width="1" height="2" fill="#e09040"/>
<rect x="793" y="408" width="1" height="2" fill="#e09040"/>
<rect x="787" y="409" width="1" height="2" fill="#c05040"/>
<rect x="795" y="409" width="1" height="2" fill="#c05040"/>
<rect x="785" y="411" width="1" height="2" fill="#e09040"/>
<rect x="793" y="411" width="1" height="2" fill="#e09040"/>
<rect x="787" y="412" width="1" height="2" fill="#c05040"/>
<rect x="795" y="412" width="1" height="2" fill="#c05040"/>
<rect x="785" y="414" width="1" height="2" fill="#e09040"/>
<rect x="793" y="414" width="1" height="2" fill="#e09040"/>
<rect x="787" y="415" width="1" height="2" fill="#c05040"/>
<rect x="795" y="415" width="1" height="2" fill="#c05040"/>
<rect x="785" y="417" width="1" height="2" fill="#e09040"/>
<rect x="793" y="417" width="1" height="2" fill="#e09040"/>
<rect x="787" y="418" width="1" height="2" fill="#c05040"/>
<rect x="795" y="418" width="1" height="2" fill="#c05040"/>
<rect x="785" y="420" width="1" height="2" fill="#e09040"/>
<rect x="793" y="420" width="1" height="2" fill="#e09040"/>
<rect x="787" y="421" width="1" height="2" fill="#c05040"/>
<rect x="795" y="421" width="1" height="2" fill="#c05040"/>
<rect x="785" y="423" width="1" height="2" fill="#e09040"/>
<rect x="793" y="423" width="1" height="2" fill="#e09040"/>
<rect x="787" y="424" width="1" height="2" fill="#c05040"/>
<rect x="795" y="424" width="1" height="2" fill="#c05040"/>
<rect x="789" y="398" width="4" height="4" fill="#60b828"/>
<rect x="785" y="403" width="1" height="2" fill="#200800"/>
<rect x="787" y="403" width="1" height="2" fill="#200800"/>
<rect x="789" y="403" width="1" height="2" fill="#200800"/>
<rect x="791" y="403" width="1" height="2" fill="#200800"/>
<rect x="793" y="403" width="1" height="2" fill="#200800"/>
<rect x="795" y="403" width="1" height="2" fill="#200800"/>
<rect x="789" y="406" width="4" height="4" fill="#60b828"/>
<rect x="785" y="411" width="1" height="2" fill="#200800"/>
<rect x="787" y="411" width="1" height="2" fill="#200800"/>
<rect x="789" y="411" width="1" height="2" fill="#200800"/>
<rect x="791" y="411" width="1" height="2" fill="#200800"/>
<rect x="793" y="411" width="1" height="2" fill="#200800"/>
<rect x="795" y="411" width="1" height="2" fill="#200800"/>
<rect x="789" y="413" width="4" height="4" fill="#60b828"/>
<rect x="785" y="418" width="1" height="2" fill="#200800"/>
<rect x="787" y="418" width="1" height="2" fill="#200800"/>
<rect x="789" y="418" width="1" height="2" fill="#200800"/>
<rect x="791" y="418" width="1" height="2" fill="#200800"/>
<rect x="793" y="418" width="1" height="2" fill="#200800"/>
<rect x="795" y="418" width="1" height="2" fill="#200800"/>
<rect x="789" y="421" width="4" height="4" fill="#60b828"/>
<rect x="785" y="395" width="11" height="1" fill="#58a058"/>
<rect x="785" y="426" width="11" height="1" fill="#58a058"/>
<rect x="824" y="667" width="13" height="34" fill="#fff4f0"/>
<rect x="825" y="669" width="1" height="2" fill="#e09040"/>
<rect x="833" y="669" width="1" height="2" fill="#e09040"/>
<rect x="827" y="670" width="1" height="2" fill="#c05040"/>
<rect x="835" y="670" width="1" height="2" fill="#c05040"/>
<rect x="825" y="672" width="1" height="2" fill="#e09040"/>
<rect x="833" y="672" width="1" height="2" fill="#e09040"/>
<rect x="827" y="673" width="1" height="2" fill="#c05040"/>
<rect x="835" y="673" width="1" height="2" fill="#c05040"/>
<rect x="825" y="675" width="1" height="2" fill="#e09040"/>
<rect x="833" y="675" width="1" height="2" fill="#e09040"/>
<rect x="827" y="676" width="1" height="2" fill="#c05040"/>
<rect x="835" y="676" width="1" height="2" fill="#c05040"/>
<rect x="825" y="678" width="1" height="2" fill="#e09040"/>
<rect x="833" y="678" width="1" height="2" fill="#e09040"/>
<rect x="827" y="679" width="1" height="2" fill="#c05040"/>
<rect x="835" y="679" width="1" height="2" fill="#c05040"/>
<rect x="825" y="681" width="1" height="2" fill="#e09040"/>
<rect x="833" y="681" width="1" height="2" fill="#e09040"/>
<rect x="827" y="682" width="1" height="2" fill="#c05040"/>
<rect x="835" y="682" width="1" height="2" fill="#c05040"/>
<rect x="825" y="684" width="1" height="2" fill="#e09040"/>
<rect x="833" y="684" width="1" height="2" fill="#e09040"/>
<rect x="827" y="685" width="1" height="2" fill="#c05040"/>
<rect x="835" y="685" width="1" height="2" fill="#c05040"/>
<rect x="825" y="687" width="1" height="2" fill="#e09040"/>
<rect x="833" y="687" width="1" height="2" fill="#e09040"/>
<rect x="827" y="688" width="1" height="2" fill="#c05040"/>
<rect x="835" y="688" width="1" height="2" fill="#c05040"/>
<rect x="825" y="690" width="1" height="2" fill="#e09040"/>
<rect x="833" y="690" width="1" height="2" fill="#e09040"/>
<rect x="827" y="691" width="1" height="2" fill="#c05040"/>
<rect x="835" y="691" width="1" height="2" fill="#c05040"/>
<rect x="825" y="693" width="1" height="2" fill="#e09040"/>
<rect x="833" y="693" width="1" height="2" fill="#e09040"/>
<rect x="827" y="694" width="1" height="2" fill="#c05040"/>
<rect x="835" y="694" width="1" height="2" fill="#c05040"/>
<rect x="825" y="696" width="1" height="2" fill="#e09040"/>
<rect x="833" y="696" width="1" height="2" fill="#e09040"/>
<rect x="827" y="697" width="1" height="2" fill="#c05040"/>
<rect x="835" y="697" width="1" height="2" fill="#c05040"/>
<rect x="829" y="671" width="4" height="4" fill="#60b828"/>
<rect x="825" y="676" width="1" height="2" fill="#200800"/>
<rect x="827" y="676" width="1" height="2" fill="#200800"/>
<rect x="829" y="676" width="1" height="2" fill="#200800"/>
<rect x="831" y="676" width="1" height="2" fill="#200800"/>
<rect x="833" y="676" width="1" height="2" fill="#200800"/>
<rect x="835" y="676" width="1" height="2" fill="#200800"/>
<rect x="829" y="679" width="4" height="4" fill="#60b828"/>
<rect x="825" y="684" width="1" height="2" fill="#200800"/>
<rect x="827" y="684" width="1" height="2" fill="#200800"/>
<rect x="829" y="684" width="1" height="2" fill="#200800"/>
<rect x="831" y="684" width="1" height="2" fill="#200800"/>
<rect x="833" y="684" width="1" height="2" fill="#200800"/>
<rect x="835" y="684" width="1" height="2" fill="#200800"/>
<rect x="829" y="686" width="4" height="4" fill="#60b828"/>
<rect x="825" y="691" width="1" height="2" fill="#200800"/>
<rect x="827" y="691" width="1" height="2" fill="#200800"/>
<rect x="829" y="691" width="1" height="2" fill="#200800"/>
<rect x="831" y="691" width="1" height="2" fill="#200800"/>
<rect x="833" y="691" width="1" height="2" fill="#200800"/>
<rect x="835" y="691" width="1" height="2" fill="#200800"/>
<rect x="829" y="694" width="4" height="4" fill="#60b828"/>
<rect x="825" y="668" width="11" height="1" fill="#58a058"/>
<rect x="825" y="699" width="11" height="1" fill="#58a058"/>
<g style="mix-blend-mode:lighten">
<rect x="126" y="44" width="716" height="1" fill="#1c1ca0"/>
<rect x="126" y="45" width="716" height="1" fill="#1c1ca0"/>
<rect x="126" y="46" width="716" height="1" fill="url(#bh2)"/>
<rect x="126" y="47" width="716" height="1" fill="#080840"/>
<rect x="126" y="48" width="716" height="1" fill="#080840"/>
<rect x="126" y="49" width="716" height="1" fill="url(#bh1)"/>
<rect x="126" y="50" width="716" height="1" fill="#1c1ca0"/>
<rect x="126" y="51" width="716" height="1" fill="#1c1ca0"/>
<rect x="126" y="80" width="716" height="1" fill="#1c1ca0"/>
<rect x="126" y="81" width="716" height="1" fill="#1c1ca0"/>
<rect x="126" y="82" width="716" height="1" fill="url(#bh2)"/>
<rect x="126" y="83" width="716" height="1" fill="#080840"/>
<rect x="126" y="84" width="716" height="1" fill="#080840"/>
<rect x="126" y="85" width="716" height="1" fill="url(#bh1)"/>
<rect x="126" y="86" width="716" height="1" fill="#1c1ca0"/>
<rect x="126" y="87" width="716" height="1" fill="#1c1ca0"/>
<rect x="126" y="115" width="716" height="1" fill="#1c1ca0"/>
<rect x="126" y="116" width="716" height="1" fill="#1c1ca0"/>
<rect x="126" y="117" width="716" height="1" fill="url(#bh2)"/>
<rect x="126" y="118" width="716" height="1" fill="#080840"/>
<rect x="126" y="119" width="716" height="1" fill="#080840"/>
<rect x="126" y="120" width="716" height="1" fill="url(#bh1)"/>
<rect x="126" y="121" width="716" height="1" fill="#1c1ca0"/>
<rect x="126" y="122" width="716" height="1" fill="#1c1ca0"/>
<rect x="126" y="150" width="148" height="1" fill="#1c1ca0"/>
<rect x="126" y="151" width="148" height="1" fill="#1c1ca0"/>
<rect x="126" y="152" width="148" height="1" fill="url(#bh2)"/>
<rect x="126" y="153" width="148" height="1" fill="#080840"/>
<rect x="126" y="154" width="148" height="1" fill="#080840"/>
<rect x="126" y="155" width="148" height="1" fill="url(#bh1)"/>
<rect x="126" y="156" width="148" height="1" fill="#1c1ca0"/>
<rect x="126" y="157" width="148" height="1" fill="#1c1ca0"/>
<rect x="126" y="185" width="148" height="1" fill="#1c1ca0"/>
<rect x="126" y="186" width="148" height="1" fill="#1c1ca0"/>
<rect x="126" y="187" width="148" height="1" fill="url(#bh2)"/>
<rect x="126" y="188" width="148" height="1" fill="#080840"/>
<rect x="126" y="189" width="148" height="1" fill="#080840"/>
<rect x="126" y="190" width="148" height="1" fill="url(#bh1)"/>
<rect x="126" y="191" width="148" height="1" fill="#1c1ca0"/>
<rect x="126" y="192" width="148" height="1" fill="#1c1ca0"/>
<rect x="126" y="220" width="148" height="1" fill="#1c1ca0"/>
<rect x="126" y="221" width="148" height="1" fill="#1c1ca0"/>
<rect x="126" y="222" width="148" height="1" fill="url(#bh2)"/>
<rect x="126" y="223" width="148" height="1" fill="#080840"/>
<rect x="126" y="224" width="148" height="1" fill="#080840"/>
<rect x="126" y="225" width="148" height="1" fill="url(#bh1)"/>
<rect x="126" y="226" width="148" height="1" fill="#1c1ca0"/>
<rect x="126" y="227" width="148" height="1" fill="#1c1ca0"/>
<rect x="126" y="255" width="148" height="1" fill="#1c1ca0"/>
<rect x="126" y="256" width="148" height="1" fill="#1c1ca0"/>
<rect x="126" y="257" width="148" height="1" fill="url(#bh2)"/>
<rect x="126" y="258" width="148" height="1" fill="#080840"/>
<rect x="126" y="259" width="148" height="1" fill="#080840"/>
<rect x="126" y="260" width="148" height="1" fill="url(#bh1)"/>
<rect x="126" y="261" width="148" height="1" fill="#1c1ca0"/>
<rect x="126" y="262" width="148" height="1" fill="#1c1ca0"/>
<rect x="126" y="290" width="148" height="1" fill="#1c1ca0"/>
<rect x="126" y="291" width="148" height="1" fill="#1c1ca0"/>
<rect x="126" y="292" width="148" height="1" fill="url(#bh2)"/>
<rect x="126" y="293" width="148" height="1" fill="#080840"/>
<rect x="126" y="294" width="148" height="1" fill="#080840"/>
<rect x="126" y="295" width="148" height="1" fill="url(#bh1)"/>
<rect x="126" y="296" width="148" height="1" fill="#1c1ca0"/>
<rect x="126" y="297" width="148" height="1" fill="#1c1ca0"/>
<rect x="126" y="325" width="148" height="1" fill="#1c1ca0"/>
<rect x="126" y="326" width="148" height="1" fill="#1c1ca0"/>
<rect x="126" y="327" width="148" height="1" fill="url(#bh2)"/>
<rect x="126" y="328" width="148" height="1" fill="#080840"/>
<rect x="126" y="329" width="148" height="1" fill="#080840"/>
<rect x="126" y="330" width="148" height="1" fill="url(#bh1)"/>
<rect x="126" y="331" width="148" height="1" fill="#1c1ca0"/>
<rect x="126" y="332" width="148" height="1" fill="#1c1ca0"/>
<rect x="126" y="360" width="148" height="1" fill="#1c1ca0"/>
<rect x="126" y="361" width="148" height="1" fill="#1c1ca0"/>
<rect x="126" y="362" width="148" height="1" fill="url(#bh2)"/>
<rect x="126" y="363" width="148" height="1" fill="#080840"/>
<rect x="126" y="364" width="148" height="1" fill="#080840"/>
<rect x="126" y="365" width="148" height="1" fill="url(#bh1)"/>
<rect x="126" y="366" width="148" height="1" fill="#1c1ca0"/>
<rect x="126" y="367" width="148" height="1" fill="#1c1ca0"/>
<rect x="126" y="396" width="148" height="1" fill="#1c1ca0"/>
<rect x="126" y="397" width="148" height="1" fill="#1c1ca0"/>
<rect x="126" y="398" width="148" height="1" fill="url(#bh2)"/>
<rect x="126" y="399" width="148" height="1" fill="#080840"/>
<rect x="126" y="400" width="148" height="1" fill="#080840"/>
<rect x="126" y="401" width="148" height="1" fill="url(#bh1)"/>
<rect x="126" y="402" width="148" height="1" fill="#1c1ca0"/>
<rect x="126" y="403" width="148" height="1" fill="#1c1ca0"/>
<rect x="126" y="431" width="148" height="1" fill="#1c1ca0"/>
<rect x="126" y="432" width="148" height="1" fill="#1c1ca0"/>
<rect x="126" y="433" width="148" height="1" fill="url(#bh2)"/>
<rect x="126" y="434" width="148" height="1" fill="#080840"/>
<rect x="126" y="435" width="148" height="1" fill="#080840"/>
<rect x="126" y="436" width="148" height="1" fill="url(#bh1)"/>
<rect x="126" y="437" width="148" height="1" fill="#1c1ca0"/>
<rect x="126" y="438" width="148" height="1" fill="#1c1ca0"/>
<rect x="126" y="466" width="148" height="1" fill="#1c1ca0"/>
<rect x="126" y="467" width="148" height="1" fill="#1c1ca0"/>
<rect x="126" y="468" width="148" height="1" fill="url(#bh2)"/>
<rect x="126" y="469" width="148" height="1" fill="#080840"/>
<rect x="126" y="470" width="148" height="1" fill="#080840"/>
<rect x="126" y="471" width="148" height="1" fill="url(#bh1)"/>
<rect x="126" y="472" width="148" height="1" fill="#1c1ca0"/>
<rect x="126" y="473" width="148" height="1" fill="#1c1ca0"/>
<rect x="126" y="501" width="148" height="1" fill="#1c1ca0"/>
<rect x="126" y="502" width="148" height="1" fill="#1c1ca0"/>
<rect x="126" y="503" width="148" height="1" fill="url(#bh2)"/>
<rect x="126" y="504" width="148" height="1" fill="#080840"/>
<rect x="126" y="505" width="148" height="1" fill="#080840"/>
<rect x="126" y="506" width="148" height="1" fill="url(#bh1)"/>
<rect x="126" y="507" width="148" height="1" fill="#1c1ca0"/>
<rect x="126" y="508" width="148" height="1" fill="#1c1ca0"/>
<rect x="126" y="536" width="148" height="1" fill="#1c1ca0"/>
<rect x="126" y="537" width="148" height="1" fill="#1c1ca0"/>
<rect x="126" y="538" width="148" height="1" fill="url(#bh2)"/>
<rect x="126" y="539" width="148" height="1" fill="#080840"/>
<rect x="126" y="540" width="148" height="1" fill="#080840"/>
<rect x="126" y="541" width="148" height="1" fill="url(#bh1)"/>
<rect x="126" y="542" width="148" height="1" fill="#1c1ca0"/>
<rect x="126" y="543" width="148" height="1" fill="#1c1ca0"/>
<rect x="126" y="571" width="148" height="1" fill="#1c1ca0"/>
<rect x="126" y="572" width="148" height="1" fill="#1c1ca0"/>
<rect x="126" y="573" width="148" height="1" fill="url(#bh2)"/>
<rect x="126" y="574" width="148" height="1" fill="#080840"/>
<rect x="126" y="575" width="148" height="1" fill="#080840"/>
<rect x="126" y="576" width="148" height="1" fill="url(#bh1)"/>
<rect x="126" y="577" width="148" height="1" fill="#1c1ca0"/>
<rect x="126" y="578" width="148" height="1" fill="#1c1ca0"/>
<rect x="126" y="606" width="148" height="1" fill="#1c1ca0"/>
<rect x="126" y="607" width="148" height="1" fill="#1c1ca0"/>
<rect x="126" y="608" width="148" height="1" fill="url(#bh2)"/>
<rect x="126" y="609" width="148" height="1" fill="#080840"/>
<rect x="126" y="610" width="148" height="1" fill="#080840"/>
<rect x="126" y="611" width="148" height="1" fill="url(#bh1)"/>
<rect x="126" y="612" width="148" height="1" fill="#1c1ca0"/>
<rect x="126" y="613" width="148" height="1" fill="#1c1ca0"/>
<rect x="126" y="641" width="148" height="1" fill="#1c1ca0"/>
<rect x="126" y="642" width="148" height="1" fill="#1c1ca0"/>
<rect x="126" y="643" width="148" height="1" fill="url(#bh2)"/>
<rect x="126" y="644" width="148" height="1" fill="#080840"/>
<rect x="126" y="645" width="148" height="1" fill="#080840"/>
<rect x="126" y="646" width="148" height="1" fill="url(#bh1)"/>
<rect x="126" y="647" width="148" height="1" fill="#1c1ca0"/>
<rect x="126" y="648" width="148" height="1" fill="#1c1ca0"/>
<rect x="126" y="676" width="148" height="1" fill="#1c1ca0"/>
<rect x="126" y="677" width="148" height="1" fill="#1c1ca0"/>
<rect x="126" y="678" width="148" height="1" fill="url(#bh2)"/>
<rect x="126" y="679" width="148" height="1" fill="#080840"/>
<rect x="126" y="680" width="148" height="1" fill="#080840"/>
<rect x="126" y="681" width="148" height="1" fill="url(#bh1)"/>
<rect x="126" y="682" width="148" height="1" fill="#1c1ca0"/>
<rect x="126" y="683" width="148" height="1" fill="#1c1ca0"/>
<rect x="126" y="711" width="148" height="1" fill="#1c1ca0"/>
<rect x="126" y="712" width="148" height="1" fill="#1c1ca0"/>
<rect x="126" y="713" width="148" height="1" fill="url(#bh2)"/>
<rect x="126" y="714" width="148" height="1" fill="#080840"/>
<rect x="126" y="715" width="148" height="1" fill="#080840"/>
<rect x="126" y="716" width="148" height="1" fill="url(#bh1)"/>
<rect x="126" y="717" width="148" height="1" fill="#1c1ca0"/>
<rect x="126" y="718" width="148" height="1" fill="#1c1ca0"/>
</g>
<path d="M272,103h1v1h-1zM273,104h1v1h-1zM274,105h1v1h-1zM275,106h1v1h-1zM276,107h1v1h-1zM277,108h1v1h-1zM277,109h1v1h-1zM278,110h1v1h-1zM279,111h1v1h-1zM280,112h1v1h-1zM281,113h1v1h-1zM282,114h1v1h-1zM283,115h1v1h-1zM284,116h1v1h-1zM285,117h1v1h-1zM286,118h1v1h-1zM287,119h1v1h-1zM287,120h1v1h-1zM288,121h1v1h-1zM289,122h1v1h-1zM290,123h1v1h-1zM291,124h1v1h-1zM292,125h1v1h-1zM293,126h1v1h-1zM294,127h1v1h-1zM295,128h1v1h-1zM296,129h1v1h-1zM297,130h1v1h-1zM297,131h1v1h-1zM298,132h1v1h-1zM299,133h1v1h-1zM300,134h1v1h-1zM301,135h1v1h-1zM302,136h1v1h-1zM303,137h1v1h-1zM304,138h1v1h-1zM305,139h1v1h-1zM306,140h1v1h-1zM306,141h1v1h-1zM307,142h1v1h-1zM308,143h1v1h-1zM309,144h1v1h-1zM310,145h1v1h-1zM311,146h1v1h-1zM312,147h1v1h-1zM313,148h1v1h-1zM314,149h1v1h-1zM315,150h1v1h-1zM316,151h1v1h-1zM316,152h1v1h-1zM317,153h1v1h-1zM318,154h1v1h-1zM319,155h1v1h-1zM320,156h1v1h-1zM321,157h1v1h-1zM322,158h1v1h-1zM323,159h1v1h-1zM324,160h1v1h-1zM325,161h1v1h-1zM326,162h1v1h-1zM326,163h1v1h-1zM327,164h1v1h-1zM328,165h1v1h-1zM329,166h1v1h-1zM330,167h1v1h-1zM331,168h1v1h-1zM332,169h1v1h-1zM333,170h1v1h-1zM334,171h1v1h-1zM335,172h1v1h-1zM336,173h1v1h-1zM336,174h1v1h-1zM337,175h1v1h-1zM338,176h1v1h-1zM339,177h1v1h-1zM340,178h1v1h-1zM341,179h1v1h-1zM342,180h1v1h-1zM343,181h1v1h-1zM344,182h1v1h-1zM345,183h1v1h-1zM346,184h1v1h-1zM346,185h1v1h-1zM347,186h1v1h-1zM348,187h1v1h-1zM349,188h1v1h-1zM350,189h1v1h-1zM351,190h1v1h-1zM352,191h1v1h-1zM353,192h1v1h-1zM354,193h1v1h-1zM355,194h1v1h-1zM356,195h1v1h-1zM356,196h1v1h-1zM357,197h1v1h-1zM358,198h1v1h-1zM359,199h1v1h-1zM360,200h1v1h-1zM361,201h1v1h-1zM362,202h1v1h-1zM363,203h1v1h-1zM364,204h1v1h-1zM365,205h1v1h-1zM365,206h1v1h-1zM366,207h1v1h-1zM367,208h1v1h-1zM368,209h1v1h-1zM369,210h1v1h-1zM370,211h1v1h-1zM371,212h1v1h-1zM372,213h1v1h-1zM373,214h1v1h-1zM374,215h1v1h-1zM375,216h1v1h-1zM375,217h1v1h-1zM376,218h1v1h-1zM377,219h1v1h-1zM378,220h1v1h-1zM379,221h1v1h-1zM380,222h1v1h-1zM381,223h1v1h-1zM382,224h1v1h-1zM383,225h1v1h-1zM384,226h1v1h-1zM385,227h1v1h-1zM385,228h1v1h-1zM386,229h1v1h-1zM387,230h1v1h-1zM388,231h1v1h-1zM389,232h1v1h-1zM390,233h1v1h-1zM391,234h1v1h-1zM392,235h1v1h-1zM393,236h1v1h-1zM394,237h1v1h-1zM395,238h1v1h-1zM395,239h1v1h-1zM396,240h1v1h-1zM397,241h1v1h-1zM398,242h1v1h-1zM399,243h1v1h-1zM400,244h1v1h-1zM401,245h1v1h-1zM402,246h1v1h-1zM403,247h1v1h-1zM404,248h1v1h-1zM405,249h1v1h-1zM405,250h1v1h-1zM406,251h1v1h-1zM407,252h1v1h-1zM408,253h1v1h-1zM409,254h1v1h-1zM410,255h1v1h-1zM411,256h1v1h-1zM412,257h1v1h-1zM413,258h1v1h-1zM414,259h1v1h-1zM415,260h1v1h-1zM415,261h1v1h-1zM416,262h1v1h-1zM417,263h1v1h-1zM418,264h1v1h-1zM419,265h1v1h-1zM420,266h1v1h-1zM421,267h1v1h-1zM422,268h1v1h-1zM423,269h1v1h-1zM424,270h1v1h-1zM424,271h1v1h-1zM425,272h1v1h-1zM426,273h1v1h-1zM427,274h1v1h-1zM428,275h1v1h-1zM429,276h1v1h-1zM430,277h1v1h-1zM431,278h1v1h-1zM432,279h1v1h-1zM433,280h1v1h-1zM434,281h1v1h-1zM434,282h1v1h-1zM435,283h1v1h-1zM436,284h1v1h-1zM437,285h1v1h-1zM438,286h1v1h-1zM439,287h1v1h-1zM440,288h1v1h-1zM441,289h1v1h-1zM442,290h1v1h-1zM443,291h1v1h-1zM444,292h1v1h-1zM444,293h1v1h-1zM445,294h1v1h-1zM446,295h1v1h-1zM447,296h1v1h-1zM448,297h1v1h-1zM449,298h1v1h-1zM450,299h1v1h-1zM451,300h1v1h-1zM452,301h1v1h-1zM453,302h1v1h-1zM454,303h1v1h-1zM454,304h1v1h-1zM455,305h1v1h-1zM456,306h1v1h-1zM457,307h1v1h-1zM458,308h1v1h-1zM459,309h1v1h-1zM460,310h1v1h-1zM461,311h1v1h-1zM462,312h1v1h-1zM463,313h1v1h-1zM464,314h1v1h-1zM464,315h1v1h-1zM465,316h1v1h-1zM466,317h1v1h-1zM467,318h1v1h-1zM468,319h1v1h-1zM469,320h1v1h-1zM470,321h1v1h-1zM471,322h1v1h-1zM472,323h1v1h-1zM473,324h1v1h-1zM473,325h1v1h-1zM474,326h1v1h-1zM475,327h1v1h-1zM476,328h1v1h-1zM477,329h1v1h-1zM478,330h1v1h-1zM479,331h1v1h-1zM480,332h1v1h-1zM481,333h1v1h-1zM482,334h1v1h-1zM483,335h1v1h-1zM483,336h1v1h-1zM484,337h1v1h-1zM485,338h1v1h-1zM486,339h1v1h-1zM487,340h1v1h-1zM488,341h1v1h-1zM489,342h1v1h-1zM490,343h1v1h-1zM491,344h1v1h-1zM492,345h1v1h-1zM493,346h1v1h-1zM493,347h1v1h-1zM494,348h1v1h-1zM495,349h1v1h-1zM496,350h1v1h-1zM497,351h1v1h-1zM498,352h1v1h-1zM499,353h1v1h-1zM500,354h1v1h-1zM501,355h1v1h-1zM502,356h1v1h-1zM503,357h1v1h-1zM503,358h1v1h-1zM504,359h1v1h-1zM505,360h1v1h-1zM506,361h1v1h-1zM507,362h1v1h-1zM508,363h1v1h-1zM509,364h1v1h-1zM510,365h1v1h-1zM511,366h1v1h-1zM512,367h1v1h-1zM513,368h1v1h-1zM513,369h1v1h-1zM514,370h1v1h-1zM515,371h1v1h-1zM516,372h1v1h-1zM517,373h1v1h-1zM518,374h1v1h-1zM519,375h1v1h-1zM520,376h1v1h-1zM521,377h1v1h-1zM522,378h1v1h-1zM523,379h1v1h-1zM523,380h1v1h-1zM524,381h1v1h-1zM525,382h1v1h-1zM526,383h1v1h-1zM527,384h1v1h-1zM528,385h1v1h-1zM529,386h1v1h-1zM530,387h1v1h-1zM531,388h1v1h-1zM532,389h1v1h-1zM532,390h1v1h-1zM533,391h1v1h-1zM534,392h1v1h-1zM535,393h1v1h-1zM536,394h1v1h-1zM537,395h1v1h-1zM538,396h1v1h-1zM539,397h1v1h-1zM540,398h1v1h-1zM541,399h1v1h-1zM542,400h1v1h-1zM542,401h1v1h-1zM543,402h1v1h-1zM544,403h1v1h-1zM545,404h1v1h-1zM546,405h1v1h-1zM547,406h1v1h-1zM548,407h1v1h-1zM549,408h1v1h-1zM550,409h1v1h-1zM551,410h1v1h-1zM552,411h1v1h-1zM552,412h1v1h-1zM553,413h1v1h-1zM554,414h1v1h-1zM555,415h1v1h-1zM556,416h1v1h-1zM557,417h1v1h-1zM558,418h1v1h-1zM559,419h1v1h-1zM560,420h1v1h-1zM561,421h1v1h-1zM562,422h1v1h-1zM562,423h1v1h-1zM563,424h1v1h-1zM564,425h1v1h-1zM565,426h1v1h-1zM566,427h1v1h-1zM567,428h1v1h-1zM568,429h1v1h-1zM569,430h1v1h-1zM570,431h1v1h-1zM571,432h1v1h-1zM572,433h1v1h-1zM572,434h1v1h-1zM573,435h1v1h-1zM574,436h1v1h-1zM575,437h1v1h-1zM576,438h1v1h-1zM577,439h1v1h-1zM578,440h1v1h-1zM579,441h1v1h-1zM580,442h1v1h-1zM581,443h1v1h-1zM582,444h1v1h-1zM582,445h1v1h-1zM583,446h1v1h-1zM584,447h1v1h-1zM585,448h1v1h-1zM586,449h1v1h-1zM587,450h1v1h-1zM588,451h1v1h-1zM589,452h1v1h-1zM590,453h1v1h-1zM591,454h1v1h-1zM591,455h1v1h-1zM592,456h1v1h-1zM593,457h1v1h-1zM594,458h1v1h-1zM595,459h1v1h-1zM596,460h1v1h-1zM597,461h1v1h-1zM598,462h1v1h-1zM599,463h1v1h-1zM600,464h1v1h-1zM601,465h1v1h-1zM601,466h1v1h-1zM602,467h1v1h-1zM603,468h1v1h-1zM604,469h1v1h-1zM605,470h1v1h-1zM606,471h1v1h-1zM607,472h1v1h-1zM608,473h1v1h-1zM609,474h1v1h-1zM610,475h1v1h-1zM611,476h1v1h-1zM611,477h1v1h-1zM612,478h1v1h-1zM613,479h1v1h-1zM614,480h1v1h-1zM615,481h1v1h-1zM616,482h1v1h-1zM617,483h1v1h-1zM618,484h1v1h-1zM619,485h1v1h-1zM620,486h1v1h-1zM621,487h1v1h-1zM621,488h1v1h-1zM622,489h1v1h-1zM623,490h1v1h-1zM624,491h1v1h-1zM625,492h1v1h-1zM626,493h1v1h-1zM627,494h1v1h-1zM628,495h1v1h-1zM629,496h1v1h-1zM630,497h1v1h-1zM631,498h1v1h-1zM631,499h1v1h-1zM632,500h1v1h-1zM633,501h1v1h-1zM634,502h1v1h-1zM635,503h1v1h-1zM636,504h1v1h-1zM637,505h1v1h-1zM638,506h1v1h-1zM639,507h1v1h-1zM640,508h1v1h-1zM641,509h1v1h-1zM641,510h1v1h-1zM642,511h1v1h-1zM643,512h1v1h-1zM644,513h1v1h-1zM645,514h1v1h-1zM646,515h1v1h-1zM647,516h1v1h-1zM648,517h1v1h-1zM649,518h1v1h-1zM650,519h1v1h-1zM650,520h1v1h-1zM651,521h1v1h-1zM652,522h1v1h-1zM653,523h1v1h-1zM654,524h1v1h-1zM655,525h1v1h-1zM656,526h1v1h-1zM657,527h1v1h-1zM658,528h1v1h-1zM659,529h1v1h-1zM660,530h1v1h-1zM660,531h1v1h-1zM661,532h1v1h-1zM662,533h1v1h-1zM663,534h1v1h-1zM664,535h1v1h-1zM665,536h1v1h-1zM666,537h1v1h-1zM667,538h1v1h-1zM668,539h1v1h-1zM669,540h1v1h-1zM670,541h1v1h-1zM670,542h1v1h-1zM671,543h1v1h-1zM672,544h1v1h-1zM673,545h1v1h-1zM674,546h1v1h-1zM675,547h1v1h-1zM676,548h1v1h-1zM677,549h1v1h-1zM678,550h1v1h-1zM679,551h1v1h-1zM680,552h1v1h-1zM680,553h1v1h-1zM681,554h1v1h-1zM682,555h1v1h-1zM683,556h1v1h-1zM684,557h1v1h-1zM685,558h1v1h-1zM686,559h1v1h-1zM687,560h1v1h-1zM688,561h1v1h-1zM689,562h1v1h-1zM690,563h1v1h-1zM690,564h1v1h-1zM691,565h1v1h-1zM692,566h1v1h-1zM693,567h1v1h-1zM694,568h1v1h-1zM695,569h1v1h-1zM696,570h1v1h-1zM697,571h1v1h-1zM698,572h1v1h-1zM699,573h1v1h-1zM700,574h1v1h-1zM700,575h1v1h-1zM701,576h1v1h-1zM702,577h1v1h-1zM703,578h1v1h-1zM704,579h1v1h-1zM705,580h1v1h-1zM706,581h1v1h-1zM707,582h1v1h-1zM708,583h1v1h-1zM709,584h1v1h-1zM709,585h1v1h-1zM710,586h1v1h-1zM711,587h1v1h-1zM712,588h1v1h-1zM713,589h1v1h-1zM714,590h1v1h-1zM715,591h1v1h-1zM716,592h1v1h-1zM717,593h1v1h-1zM718,594h1v1h-1zM719,595h1v1h-1zM719,596h1v1h-1zM720,597h1v1h-1zM721,598h1v1h-1zM722,599h1v1h-1zM723,600h1v1h-1zM724,601h1v1h-1zM725,602h1v1h-1zM726,603h1v1h-1zM727,604h1v1h-1zM728,605h1v1h-1zM729,606h1v1h-1zM729,607h1v1h-1zM730,608h1v1h-1zM731,609h1v1h-1zM732,610h1v1h-1zM733,611h1v1h-1zM734,612h1v1h-1zM735,613h1v1h-1zM736,614h1v1h-1zM737,615h1v1h-1zM738,616h1v1h-1zM739,617h1v1h-1zM739,618h1v1h-1zM740,619h1v1h-1zM741,620h1v1h-1zM742,621h1v1h-1zM743,622h1v1h-1zM744,623h1v1h-1zM745,624h1v1h-1zM746,625h1v1h-1zM747,626h1v1h-1zM748,627h1v1h-1zM749,628h1v1h-1zM749,629h1v1h-1zM750,630h1v1h-1zM751,631h1v1h-1zM752,632h1v1h-1zM753,633h1v1h-1zM754,634h1v1h-1zM755,635h1v1h-1zM756,636h1v1h-1zM757,637h1v1h-1zM758,638h1v1h-1zM758,639h1v1h-1zM759,640h1v1h-1zM760,641h1v1h-1zM761,642h1v1h-1zM762,643h1v1h-1zM763,644h1v1h-1zM764,645h1v1h-1zM765,646h1v1h-1zM766,647h1v1h-1zM767,648h1v1h-1zM768,649h1v1h-1zM768,650h1v1h-1zM769,651h1v1h-1zM770,652h1v1h-1zM771,653h1v1h-1zM772,654h1v1h-1zM773,655h1v1h-1zM774,656h1v1h-1zM775,657h1v1h-1zM776,658h1v1h-1zM777,659h1v1h-1zM778,660h1v1h-1zM778,661h1v1h-1zM779,662h1v1h-1zM780,663h1v1h-1zM781,664h1v1h-1zM782,665h1v1h-1zM783,666h1v1h-1zM784,667h1v1h-1zM785,668h1v1h-1zM786,669h1v1h-1zM787,670h1v1h-1zM788,671h1v1h-1zM788,672h1v1h-1zM789,673h1v1h-1zM790,674h1v1h-1zM791,675h1v1h-1zM792,676h1v1h-1zM793,677h1v1h-1zM794,678h1v1h-1zM795,679h1v1h-1zM796,680h1v1h-1zM797,681h1v1h-1zM798,682h1v1h-1zM798,683h1v1h-1zM799,684h1v1h-1zM800,685h1v1h-1zM801,686h1v1h-1zM802,687h1v1h-1zM803,688h1v1h-1zM804,689h1v1h-1zM805,690h1v1h-1zM806,691h1v1h-1zM807,692h1v1h-1zM808,693h1v1h-1zM808,694h1v1h-1zM809,695h1v1h-1zM810,696h1v1h-1zM811,697h1v1h-1zM812,698h1v1h-1zM813,699h1v1h-1zM814,700h1v1h-1zM815,701h1v1h-1zM816,702h1v1h-1zM817,703h1v1h-1zM817,704h1v1h-1zM818,705h1v1h-1zM819,706h1v1h-1zM820,707h1v1h-1zM821,708h1v1h-1zM822,709h1v1h-1zM823,710h1v1h-1zM824,711h1v1h-1zM825,712h1v1h-1zM826,713h1v1h-1zM827,714h1v1h-1zM827,715h1v1h-1zM828,716h1v1h-1zM829,717h1v1h-1zM830,718h1v1h-1zM831,719h1v1h-1zM832,720h1v1h-1zM833,721h1v1h-1zM834,722h1v1h-1zM835,723h1v1h-1zM836,724h1v1h-1zM837,725h1v1h-1zM837,726h1v1h-1zM838,727h1v1h-1zM839,728h1v1h-1zM840,729h1v1h-1zM841,730h1v1h-1zM842,731h1v1h-1zM842,103h1v1h-1zM841,104h1v1h-1zM840,105h1v1h-1zM839,106h1v1h-1zM838,107h1v1h-1zM837,108h1v1h-1zM837,109h1v1h-1zM836,110h1v1h-1zM835,111h1v1h-1zM834,112h1v1h-1zM833,113h1v1h-1zM832,114h1v1h-1zM831,115h1v1h-1zM830,116h1v1h-1zM829,117h1v1h-1zM828,118h1v1h-1zM827,119h1v1h-1zM827,120h1v1h-1zM826,121h1v1h-1zM825,122h1v1h-1zM824,123h1v1h-1zM823,124h1v1h-1zM822,125h1v1h-1zM821,126h1v1h-1zM820,127h1v1h-1zM819,128h1v1h-1zM818,129h1v1h-1zM817,130h1v1h-1zM817,131h1v1h-1zM816,132h1v1h-1zM815,133h1v1h-1zM814,134h1v1h-1zM813,135h1v1h-1zM812,136h1v1h-1zM811,137h1v1h-1zM810,138h1v1h-1zM809,139h1v1h-1zM808,140h1v1h-1zM808,141h1v1h-1zM807,142h1v1h-1zM806,143h1v1h-1zM805,144h1v1h-1zM804,145h1v1h-1zM803,146h1v1h-1zM802,147h1v1h-1zM801,148h1v1h-1zM800,149h1v1h-1zM799,150h1v1h-1zM798,151h1v1h-1zM798,152h1v1h-1zM797,153h1v1h-1zM796,154h1v1h-1zM795,155h1v1h-1zM794,156h1v1h-1zM793,157h1v1h-1zM792,158h1v1h-1zM791,159h1v1h-1zM790,160h1v1h-1zM789,161h1v1h-1zM788,162h1v1h-1zM788,163h1v1h-1zM787,164h1v1h-1zM786,165h1v1h-1zM785,166h1v1h-1zM784,167h1v1h-1zM783,168h1v1h-1zM782,169h1v1h-1zM781,170h1v1h-1zM780,171h1v1h-1zM779,172h1v1h-1zM778,173h1v1h-1zM778,174h1v1h-1zM777,175h1v1h-1zM776,176h1v1h-1zM775,177h1v1h-1zM774,178h1v1h-1zM773,179h1v1h-1zM772,180h1v1h-1zM771,181h1v1h-1zM770,182h1v1h-1zM769,183h1v1h-1zM768,184h1v1h-1zM768,185h1v1h-1zM767,186h1v1h-1zM766,187h1v1h-1zM765,188h1v1h-1zM764,189h1v1h-1zM763,190h1v1h-1zM762,191h1v1h-1zM761,192h1v1h-1zM760,193h1v1h-1zM759,194h1v1h-1zM758,195h1v1h-1zM758,196h1v1h-1zM757,197h1v1h-1zM756,198h1v1h-1zM755,199h1v1h-1zM754,200h1v1h-1zM753,201h1v1h-1zM752,202h1v1h-1zM751,203h1v1h-1zM750,204h1v1h-1zM749,205h1v1h-1zM749,206h1v1h-1zM748,207h1v1h-1zM747,208h1v1h-1zM746,209h1v1h-1zM745,210h1v1h-1zM744,211h1v1h-1zM743,212h1v1h-1zM742,213h1v1h-1zM741,214h1v1h-1zM740,215h1v1h-1zM739,216h1v1h-1zM739,217h1v1h-1zM738,218h1v1h-1zM737,219h1v1h-1zM736,220h1v1h-1zM735,221h1v1h-1zM734,222h1v1h-1zM733,223h1v1h-1zM732,224h1v1h-1zM731,225h1v1h-1zM730,226h1v1h-1zM729,227h1v1h-1zM729,228h1v1h-1zM728,229h1v1h-1zM727,230h1v1h-1zM726,231h1v1h-1zM725,232h1v1h-1zM724,233h1v1h-1zM723,234h1v1h-1zM722,235h1v1h-1zM721,236h1v1h-1zM720,237h1v1h-1zM719,238h1v1h-1zM719,239h1v1h-1zM718,240h1v1h-1zM717,241h1v1h-1zM716,242h1v1h-1zM715,243h1v1h-1zM714,244h1v1h-1zM713,245h1v1h-1zM712,246h1v1h-1zM711,247h1v1h-1zM710,248h1v1h-1zM709,249h1v1h-1zM709,250h1v1h-1zM708,251h1v1h-1zM707,252h1v1h-1zM706,253h1v1h-1zM705,254h1v1h-1zM704,255h1v1h-1zM703,256h1v1h-1zM702,257h1v1h-1zM701,258h1v1h-1zM700,259h1v1h-1zM699,260h1v1h-1zM699,261h1v1h-1zM698,262h1v1h-1zM697,263h1v1h-1zM696,264h1v1h-1zM695,265h1v1h-1zM694,266h1v1h-1zM693,267h1v1h-1zM692,268h1v1h-1zM691,269h1v1h-1zM690,270h1v1h-1zM690,271h1v1h-1zM689,272h1v1h-1zM688,273h1v1h-1zM687,274h1v1h-1zM686,275h1v1h-1zM685,276h1v1h-1zM684,277h1v1h-1zM683,278h1v1h-1zM682,279h1v1h-1zM681,280h1v1h-1zM680,281h1v1h-1zM680,282h1v1h-1zM679,283h1v1h-1zM678,284h1v1h-1zM677,285h1v1h-1zM676,286h1v1h-1zM675,287h1v1h-1zM674,288h1v1h-1zM673,289h1v1h-1zM672,290h1v1h-1zM671,291h1v1h-1zM670,292h1v1h-1zM670,293h1v1h-1zM669,294h1v1h-1zM668,295h1v1h-1zM667,296h1v1h-1zM666,297h1v1h-1zM665,298h1v1h-1zM664,299h1v1h-1zM663,300h1v1h-1zM662,301h1v1h-1zM661,302h1v1h-1zM660,303h1v1h-1zM660,304h1v1h-1zM659,305h1v1h-1zM658,306h1v1h-1zM657,307h1v1h-1zM656,308h1v1h-1zM655,309h1v1h-1zM654,310h1v1h-1zM653,311h1v1h-1zM652,312h1v1h-1zM651,313h1v1h-1zM650,314h1v1h-1zM650,315h1v1h-1zM649,316h1v1h-1zM648,317h1v1h-1zM647,318h1v1h-1zM646,319h1v1h-1zM645,320h1v1h-1zM644,321h1v1h-1zM643,322h1v1h-1zM642,323h1v1h-1zM641,324h1v1h-1zM641,325h1v1h-1zM640,326h1v1h-1zM639,327h1v1h-1zM638,328h1v1h-1zM637,329h1v1h-1zM636,330h1v1h-1zM635,331h1v1h-1zM634,332h1v1h-1zM633,333h1v1h-1zM632,334h1v1h-1zM631,335h1v1h-1zM631,336h1v1h-1zM630,337h1v1h-1zM629,338h1v1h-1zM628,339h1v1h-1zM627,340h1v1h-1zM626,341h1v1h-1zM625,342h1v1h-1zM624,343h1v1h-1zM623,344h1v1h-1zM622,345h1v1h-1zM621,346h1v1h-1zM621,347h1v1h-1zM620,348h1v1h-1zM619,349h1v1h-1zM618,350h1v1h-1zM617,351h1v1h-1zM616,352h1v1h-1zM615,353h1v1h-1zM614,354h1v1h-1zM613,355h1v1h-1zM612,356h1v1h-1zM611,357h1v1h-1zM611,358h1v1h-1zM610,359h1v1h-1zM609,360h1v1h-1zM608,361h1v1h-1zM607,362h1v1h-1zM606,363h1v1h-1zM605,364h1v1h-1zM604,365h1v1h-1zM603,366h1v1h-1zM602,367h1v1h-1zM601,368h1v1h-1zM601,369h1v1h-1zM600,370h1v1h-1zM599,371h1v1h-1zM598,372h1v1h-1zM597,373h1v1h-1zM596,374h1v1h-1zM595,375h1v1h-1zM594,376h1v1h-1zM593,377h1v1h-1zM592,378h1v1h-1zM591,379h1v1h-1zM591,380h1v1h-1zM590,381h1v1h-1zM589,382h1v1h-1zM588,383h1v1h-1zM587,384h1v1h-1zM586,385h1v1h-1zM585,386h1v1h-1zM584,387h1v1h-1zM583,388h1v1h-1zM582,389h1v1h-1zM582,390h1v1h-1zM581,391h1v1h-1zM580,392h1v1h-1zM579,393h1v1h-1zM578,394h1v1h-1zM577,395h1v1h-1zM576,396h1v1h-1zM575,397h1v1h-1zM574,398h1v1h-1zM573,399h1v1h-1zM572,400h1v1h-1zM572,401h1v1h-1zM571,402h1v1h-1zM570,403h1v1h-1zM569,404h1v1h-1zM568,405h1v1h-1zM567,406h1v1h-1zM566,407h1v1h-1zM565,408h1v1h-1zM564,409h1v1h-1zM563,410h1v1h-1zM562,411h1v1h-1zM562,412h1v1h-1zM561,413h1v1h-1zM560,414h1v1h-1zM559,415h1v1h-1zM558,416h1v1h-1zM557,417h1v1h-1zM556,418h1v1h-1zM555,419h1v1h-1zM554,420h1v1h-1zM553,421h1v1h-1zM552,422h1v1h-1zM552,423h1v1h-1zM551,424h1v1h-1zM550,425h1v1h-1zM549,426h1v1h-1zM548,427h1v1h-1zM547,428h1v1h-1zM546,429h1v1h-1zM545,430h1v1h-1zM544,431h1v1h-1zM543,432h1v1h-1zM542,433h1v1h-1zM542,434h1v1h-1zM541,435h1v1h-1zM540,436h1v1h-1zM539,437h1v1h-1zM538,438h1v1h-1zM537,439h1v1h-1zM536,440h1v1h-1zM535,441h1v1h-1zM534,442h1v1h-1zM533,443h1v1h-1zM532,444h1v1h-1zM532,445h1v1h-1zM531,446h1v1h-1zM530,447h1v1h-1zM529,448h1v1h-1zM528,449h1v1h-1zM527,450h1v1h-1zM526,451h1v1h-1zM525,452h1v1h-1zM524,453h1v1h-1zM523,454h1v1h-1zM523,455h1v1h-1zM522,456h1v1h-1zM521,457h1v1h-1zM520,458h1v1h-1zM519,459h1v1h-1zM518,460h1v1h-1zM517,461h1v1h-1zM516,462h1v1h-1zM515,463h1v1h-1zM514,464h1v1h-1zM513,465h1v1h-1zM513,466h1v1h-1zM512,467h1v1h-1zM511,468h1v1h-1zM510,469h1v1h-1zM509,470h1v1h-1zM508,471h1v1h-1zM507,472h1v1h-1zM506,473h1v1h-1zM505,474h1v1h-1zM504,475h1v1h-1zM503,476h1v1h-1zM503,477h1v1h-1zM502,478h1v1h-1zM501,479h1v1h-1zM500,480h1v1h-1zM499,481h1v1h-1zM498,482h1v1h-1zM497,483h1v1h-1zM496,484h1v1h-1zM495,485h1v1h-1zM494,486h1v1h-1zM493,487h1v1h-1zM493,488h1v1h-1zM492,489h1v1h-1zM491,490h1v1h-1zM490,491h1v1h-1zM489,492h1v1h-1zM488,493h1v1h-1zM487,494h1v1h-1zM486,495h1v1h-1zM485,496h1v1h-1zM484,497h1v1h-1zM483,498h1v1h-1zM483,499h1v1h-1zM482,500h1v1h-1zM481,501h1v1h-1zM480,502h1v1h-1zM479,503h1v1h-1zM478,504h1v1h-1zM477,505h1v1h-1zM476,506h1v1h-1zM475,507h1v1h-1zM474,508h1v1h-1zM473,509h1v1h-1zM473,510h1v1h-1zM472,511h1v1h-1zM471,512h1v1h-1zM470,513h1v1h-1zM469,514h1v1h-1zM468,515h1v1h-1zM467,516h1v1h-1zM466,517h1v1h-1zM465,518h1v1h-1zM464,519h1v1h-1zM464,520h1v1h-1zM463,521h1v1h-1zM462,522h1v1h-1zM461,523h1v1h-1zM460,524h1v1h-1zM459,525h1v1h-1zM458,526h1v1h-1zM457,527h1v1h-1zM456,528h1v1h-1zM455,529h1v1h-1zM454,530h1v1h-1zM454,531h1v1h-1zM453,532h1v1h-1zM452,533h1v1h-1zM451,534h1v1h-1zM450,535h1v1h-1zM449,536h1v1h-1zM448,537h1v1h-1zM447,538h1v1h-1zM446,539h1v1h-1zM445,540h1v1h-1zM444,541h1v1h-1zM444,542h1v1h-1zM443,543h1v1h-1zM442,544h1v1h-1zM441,545h1v1h-1zM440,546h1v1h-1zM439,547h1v1h-1zM438,548h1v1h-1zM437,549h1v1h-1zM436,550h1v1h-1zM435,551h1v1h-1zM434,552h1v1h-1zM434,553h1v1h-1zM433,554h1v1h-1zM432,555h1v1h-1zM431,556h1v1h-1zM430,557h1v1h-1zM429,558h1v1h-1zM428,559h1v1h-1zM427,560h1v1h-1zM426,561h1v1h-1zM425,562h1v1h-1zM424,563h1v1h-1zM424,564h1v1h-1zM423,565h1v1h-1zM422,566h1v1h-1zM421,567h1v1h-1zM420,568h1v1h-1zM419,569h1v1h-1zM418,570h1v1h-1zM417,571h1v1h-1zM416,572h1v1h-1zM415,573h1v1h-1zM414,574h1v1h-1zM414,575h1v1h-1zM413,576h1v1h-1zM412,577h1v1h-1zM411,578h1v1h-1zM410,579h1v1h-1zM409,580h1v1h-1zM408,581h1v1h-1zM407,582h1v1h-1zM406,583h1v1h-1zM405,584h1v1h-1zM405,585h1v1h-1zM404,586h1v1h-1zM403,587h1v1h-1zM402,588h1v1h-1zM401,589h1v1h-1zM400,590h1v1h-1zM399,591h1v1h-1zM398,592h1v1h-1zM397,593h1v1h-1zM396,594h1v1h-1zM395,595h1v1h-1zM395,596h1v1h-1zM394,597h1v1h-1zM393,598h1v1h-1zM392,599h1v1h-1zM391,600h1v1h-1zM390,601h1v1h-1zM389,602h1v1h-1zM388,603h1v1h-1zM387,604h1v1h-1zM386,605h1v1h-1zM385,606h1v1h-1zM385,607h1v1h-1zM384,608h1v1h-1zM383,609h1v1h-1zM382,610h1v1h-1zM381,611h1v1h-1zM380,612h1v1h-1zM379,613h1v1h-1zM378,614h1v1h-1zM377,615h1v1h-1zM376,616h1v1h-1zM375,617h1v1h-1zM375,618h1v1h-1zM374,619h1v1h-1zM373,620h1v1h-1zM372,621h1v1h-1zM371,622h1v1h-1zM370,623h1v1h-1zM369,624h1v1h-1zM368,625h1v1h-1zM367,626h1v1h-1zM366,627h1v1h-1zM365,628h1v1h-1zM365,629h1v1h-1zM364,630h1v1h-1zM363,631h1v1h-1zM362,632h1v1h-1zM361,633h1v1h-1zM360,634h1v1h-1zM359,635h1v1h-1zM358,636h1v1h-1zM357,637h1v1h-1zM356,638h1v1h-1zM356,639h1v1h-1zM355,640h1v1h-1zM354,641h1v1h-1zM353,642h1v1h-1zM352,643h1v1h-1zM351,644h1v1h-1zM350,645h1v1h-1zM349,646h1v1h-1zM348,647h1v1h-1zM347,648h1v1h-1zM346,649h1v1h-1zM346,650h1v1h-1zM345,651h1v1h-1zM344,652h1v1h-1zM343,653h1v1h-1zM342,654h1v1h-1zM341,655h1v1h-1zM340,656h1v1h-1zM339,657h1v1h-1zM338,658h1v1h-1zM337,659h1v1h-1zM336,660h1v1h-1zM336,661h1v1h-1zM335,662h1v1h-1zM334,663h1v1h-1zM333,664h1v1h-1zM332,665h1v1h-1zM331,666h1v1h-1zM330,667h1v1h-1zM329,668h1v1h-1zM328,669h1v1h-1zM327,670h1v1h-1zM326,671h1v1h-1zM326,672h1v1h-1zM325,673h1v1h-1zM324,674h1v1h-1zM323,675h1v1h-1zM322,676h1v1h-1zM321,677h1v1h-1zM320,678h1v1h-1zM319,679h1v1h-1zM318,680h1v1h-1zM317,681h1v1h-1zM316,682h1v1h-1zM316,683h1v1h-1zM315,684h1v1h-1zM314,685h1v1h-1zM313,686h1v1h-1zM312,687h1v1h-1zM311,688h1v1h-1zM310,689h1v1h-1zM309,690h1v1h-1zM308,691h1v1h-1zM307,692h1v1h-1zM306,693h1v1h-1zM306,694h1v1h-1zM305,695h1v1h-1zM304,696h1v1h-1zM303,697h1v1h-1zM302,698h1v1h-1zM301,699h1v1h-1zM300,700h1v1h-1zM299,701h1v1h-1zM298,702h1v1h-1zM297,703h1v1h-1zM297,704h1v1h-1zM296,705h1v1h-1zM295,706h1v1h-1zM294,707h1v1h-1zM293,708h1v1h-1zM292,709h1v1h-1zM291,710h1v1h-1zM290,711h1v1h-1zM289,712h1v1h-1zM288,713h1v1h-1zM287,714h1v1h-1zM287,715h1v1h-1zM286,716h1v1h-1zM285,717h1v1h-1zM284,718h1v1h-1zM283,719h1v1h-1zM282,720h1v1h-1zM281,721h1v1h-1zM280,722h1v1h-1zM279,723h1v1h-1zM278,724h1v1h-1zM277,725h1v1h-1zM277,726h1v1h-1zM276,727h1v1h-1zM275,728h1v1h-1zM274,729h1v1h-1zM273,730h1v1h-1zM272,731h1v1h-1z" fill="#f0f090"/>
</g></svg></body></html>
